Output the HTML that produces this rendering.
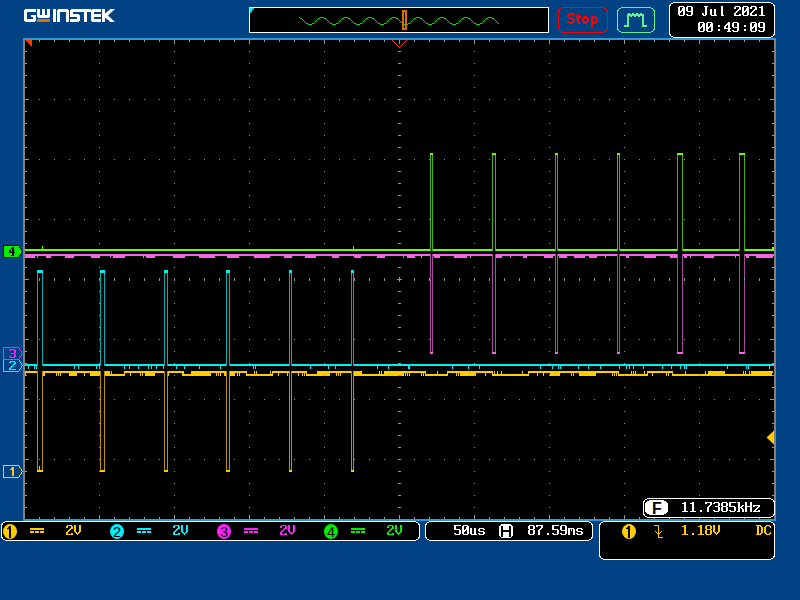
<!DOCTYPE html>
<html><head><meta charset="utf-8"><style>
html,body{margin:0;padding:0;background:#004284;width:800px;height:600px;overflow:hidden}
svg{display:block}
</style></head><body>
<svg width="800" height="600" viewBox="0 0 800 600" shape-rendering="crispEdges">
<rect x="0" y="0" width="800" height="600" fill="#004284"/>
<rect x="24" y="9" width="12" height="3" fill="#ffffff"/>
<rect x="24" y="9" width="3" height="13" fill="#ffffff"/>
<rect x="24" y="19" width="12" height="3" fill="#ffffff"/>
<rect x="33" y="15" width="3" height="7" fill="#ffffff"/>
<rect x="31" y="15" width="5" height="2" fill="#ffffff"/>
<rect x="24" y="9" width="1" height="1" fill="#004284"/>
<rect x="24" y="21" width="1" height="1" fill="#004284"/>
<rect x="35" y="21" width="1" height="1" fill="#004284"/>
<rect x="37" y="9" width="3" height="9" fill="#ffffff"/>
<rect x="42" y="9" width="3" height="9" fill="#ffffff"/>
<rect x="47" y="9" width="3" height="9" fill="#ffffff"/>
<rect x="37" y="15" width="13" height="3" fill="#ffffff"/>
<rect x="37" y="17" width="1" height="1" fill="#004284"/>
<rect x="49" y="17" width="1" height="1" fill="#004284"/>
<rect x="37" y="19" width="13" height="3" fill="#e06c00"/>
<rect x="53" y="9" width="3" height="13" fill="#ffffff"/>
<rect x="57" y="9" width="12" height="3" fill="#ffffff"/>
<rect x="57" y="9" width="3" height="13" fill="#ffffff"/>
<rect x="66" y="9" width="3" height="13" fill="#ffffff"/>
<rect x="57" y="9" width="1" height="1" fill="#004284"/>
<rect x="68" y="9" width="1" height="1" fill="#004284"/>
<rect x="70" y="9" width="21" height="3" fill="#ffffff"/>
<rect x="70" y="9" width="3" height="8" fill="#ffffff"/>
<rect x="70" y="14" width="10" height="3" fill="#ffffff"/>
<rect x="77" y="14" width="3" height="8" fill="#ffffff"/>
<rect x="70" y="19" width="10" height="3" fill="#ffffff"/>
<rect x="70" y="9" width="1" height="1" fill="#004284"/>
<rect x="79" y="14" width="1" height="1" fill="#004284"/>
<rect x="79" y="21" width="1" height="1" fill="#004284"/>
<rect x="84" y="9" width="3" height="13" fill="#ffffff"/>
<rect x="91" y="9" width="3" height="13" fill="#ffffff"/>
<rect x="91" y="9" width="10" height="3" fill="#ffffff"/>
<rect x="91" y="14" width="10" height="3" fill="#ffffff"/>
<rect x="91" y="19" width="10" height="3" fill="#ffffff"/>
<rect x="91" y="9" width="1" height="1" fill="#004284"/>
<rect x="91" y="21" width="1" height="1" fill="#004284"/>
<rect x="102" y="9" width="3" height="13" fill="#ffffff"/>
<polygon points="105,13.5 110.5,9 115,9 108,15.5 115,22 110.5,22 105,17.5" fill="#ffffff" shape-rendering="geometricPrecision"/>
<rect x="249" y="7" width="300" height="26" fill="#ffffff"/>
<rect x="250" y="8" width="298" height="24" fill="#000"/>
<polygon points="250,8 254.5,8 250,13.5" fill="#00e8ff" shape-rendering="geometricPrecision"/>
<rect x="299" y="17" width="1" height="1" fill="#00e000"/>
<rect x="300" y="18" width="1" height="1" fill="#00e000"/>
<rect x="301" y="18" width="1" height="1" fill="#00e000"/>
<rect x="302" y="19" width="1" height="1" fill="#00e000"/>
<rect x="303" y="20" width="1" height="1" fill="#00e000"/>
<rect x="304" y="21" width="1" height="1" fill="#00e000"/>
<rect x="305" y="22" width="1" height="1" fill="#00e000"/>
<rect x="306" y="23" width="1" height="1" fill="#00e000"/>
<rect x="307" y="23" width="1" height="1" fill="#00e000"/>
<rect x="308" y="24" width="1" height="1" fill="#00e000"/>
<rect x="309" y="24" width="1" height="1" fill="#00e000"/>
<rect x="310" y="24" width="1" height="1" fill="#00e000"/>
<rect x="311" y="24" width="1" height="1" fill="#00e000"/>
<rect x="312" y="23" width="1" height="1" fill="#00e000"/>
<rect x="313" y="23" width="1" height="1" fill="#00e000"/>
<rect x="314" y="22" width="1" height="1" fill="#00e000"/>
<rect x="315" y="21" width="1" height="1" fill="#00e000"/>
<rect x="316" y="20" width="1" height="1" fill="#00e000"/>
<rect x="317" y="19" width="1" height="1" fill="#00e000"/>
<rect x="318" y="18" width="1" height="1" fill="#00e000"/>
<rect x="319" y="18" width="1" height="1" fill="#00e000"/>
<rect x="320" y="17" width="1" height="1" fill="#00e000"/>
<rect x="321" y="17" width="1" height="1" fill="#00e000"/>
<rect x="322" y="17" width="1" height="1" fill="#00e000"/>
<rect x="323" y="17" width="1" height="1" fill="#00e000"/>
<rect x="324" y="18" width="1" height="1" fill="#00e000"/>
<rect x="325" y="18" width="1" height="1" fill="#00e000"/>
<rect x="326" y="19" width="1" height="1" fill="#00e000"/>
<rect x="327" y="20" width="1" height="1" fill="#00e000"/>
<rect x="328" y="21" width="1" height="1" fill="#00e000"/>
<rect x="329" y="22" width="1" height="1" fill="#00e000"/>
<rect x="330" y="23" width="1" height="1" fill="#00e000"/>
<rect x="331" y="23" width="1" height="1" fill="#00e000"/>
<rect x="332" y="24" width="1" height="1" fill="#00e000"/>
<rect x="333" y="24" width="1" height="1" fill="#00e000"/>
<rect x="334" y="24" width="1" height="1" fill="#00e000"/>
<rect x="335" y="24" width="1" height="1" fill="#00e000"/>
<rect x="336" y="23" width="1" height="1" fill="#00e000"/>
<rect x="337" y="23" width="1" height="1" fill="#00e000"/>
<rect x="338" y="22" width="1" height="1" fill="#00e000"/>
<rect x="339" y="21" width="1" height="1" fill="#00e000"/>
<rect x="340" y="20" width="1" height="1" fill="#00e000"/>
<rect x="341" y="19" width="1" height="1" fill="#00e000"/>
<rect x="342" y="18" width="1" height="1" fill="#00e000"/>
<rect x="343" y="18" width="1" height="1" fill="#00e000"/>
<rect x="344" y="17" width="1" height="1" fill="#00e000"/>
<rect x="345" y="17" width="1" height="1" fill="#00e000"/>
<rect x="346" y="17" width="1" height="1" fill="#00e000"/>
<rect x="347" y="17" width="1" height="1" fill="#00e000"/>
<rect x="348" y="18" width="1" height="1" fill="#00e000"/>
<rect x="349" y="18" width="1" height="1" fill="#00e000"/>
<rect x="350" y="19" width="1" height="1" fill="#00e000"/>
<rect x="351" y="20" width="1" height="1" fill="#00e000"/>
<rect x="352" y="21" width="1" height="1" fill="#00e000"/>
<rect x="353" y="22" width="1" height="1" fill="#00e000"/>
<rect x="354" y="23" width="1" height="1" fill="#00e000"/>
<rect x="355" y="23" width="1" height="1" fill="#00e000"/>
<rect x="356" y="24" width="1" height="1" fill="#00e000"/>
<rect x="357" y="24" width="1" height="1" fill="#00e000"/>
<rect x="358" y="24" width="1" height="1" fill="#00e000"/>
<rect x="359" y="24" width="1" height="1" fill="#00e000"/>
<rect x="360" y="23" width="1" height="1" fill="#00e000"/>
<rect x="361" y="23" width="1" height="1" fill="#00e000"/>
<rect x="362" y="22" width="1" height="1" fill="#00e000"/>
<rect x="363" y="21" width="1" height="1" fill="#00e000"/>
<rect x="364" y="20" width="1" height="1" fill="#00e000"/>
<rect x="365" y="19" width="1" height="1" fill="#00e000"/>
<rect x="366" y="18" width="1" height="1" fill="#00e000"/>
<rect x="367" y="18" width="1" height="1" fill="#00e000"/>
<rect x="368" y="17" width="1" height="1" fill="#00e000"/>
<rect x="369" y="17" width="1" height="1" fill="#00e000"/>
<rect x="370" y="17" width="1" height="1" fill="#00e000"/>
<rect x="371" y="17" width="1" height="1" fill="#00e000"/>
<rect x="372" y="18" width="1" height="1" fill="#00e000"/>
<rect x="373" y="18" width="1" height="1" fill="#00e000"/>
<rect x="374" y="19" width="1" height="1" fill="#00e000"/>
<rect x="375" y="20" width="1" height="1" fill="#00e000"/>
<rect x="376" y="21" width="1" height="1" fill="#00e000"/>
<rect x="377" y="22" width="1" height="1" fill="#00e000"/>
<rect x="378" y="23" width="1" height="1" fill="#00e000"/>
<rect x="379" y="23" width="1" height="1" fill="#00e000"/>
<rect x="380" y="24" width="1" height="1" fill="#00e000"/>
<rect x="381" y="24" width="1" height="1" fill="#00e000"/>
<rect x="382" y="24" width="1" height="1" fill="#00e000"/>
<rect x="383" y="24" width="1" height="1" fill="#00e000"/>
<rect x="384" y="23" width="1" height="1" fill="#00e000"/>
<rect x="385" y="23" width="1" height="1" fill="#00e000"/>
<rect x="386" y="22" width="1" height="1" fill="#00e000"/>
<rect x="387" y="21" width="1" height="1" fill="#00e000"/>
<rect x="388" y="20" width="1" height="1" fill="#00e000"/>
<rect x="389" y="19" width="1" height="1" fill="#00e000"/>
<rect x="390" y="18" width="1" height="1" fill="#00e000"/>
<rect x="391" y="18" width="1" height="1" fill="#00e000"/>
<rect x="392" y="17" width="1" height="1" fill="#00e000"/>
<rect x="393" y="17" width="1" height="1" fill="#00e000"/>
<rect x="394" y="17" width="1" height="1" fill="#00e000"/>
<rect x="395" y="17" width="1" height="1" fill="#00e000"/>
<rect x="396" y="18" width="1" height="1" fill="#00e000"/>
<rect x="397" y="18" width="1" height="1" fill="#00e000"/>
<rect x="398" y="19" width="1" height="1" fill="#00e000"/>
<rect x="399" y="20" width="1" height="1" fill="#00e000"/>
<rect x="400" y="21" width="1" height="1" fill="#00e000"/>
<rect x="401" y="22" width="1" height="1" fill="#00e000"/>
<rect x="402" y="23" width="1" height="1" fill="#00e000"/>
<rect x="403" y="23" width="1" height="1" fill="#00e000"/>
<rect x="404" y="24" width="1" height="1" fill="#00e000"/>
<rect x="405" y="24" width="1" height="1" fill="#00e000"/>
<rect x="406" y="24" width="1" height="1" fill="#00e000"/>
<rect x="407" y="24" width="1" height="1" fill="#00e000"/>
<rect x="408" y="23" width="1" height="1" fill="#00e000"/>
<rect x="409" y="23" width="1" height="1" fill="#00e000"/>
<rect x="410" y="22" width="1" height="1" fill="#00e000"/>
<rect x="411" y="21" width="1" height="1" fill="#00e000"/>
<rect x="412" y="20" width="1" height="1" fill="#00e000"/>
<rect x="413" y="19" width="1" height="1" fill="#00e000"/>
<rect x="414" y="18" width="1" height="1" fill="#00e000"/>
<rect x="415" y="18" width="1" height="1" fill="#00e000"/>
<rect x="416" y="17" width="1" height="1" fill="#00e000"/>
<rect x="417" y="17" width="1" height="1" fill="#00e000"/>
<rect x="418" y="17" width="1" height="1" fill="#00e000"/>
<rect x="419" y="17" width="1" height="1" fill="#00e000"/>
<rect x="420" y="18" width="1" height="1" fill="#00e000"/>
<rect x="421" y="18" width="1" height="1" fill="#00e000"/>
<rect x="422" y="19" width="1" height="1" fill="#00e000"/>
<rect x="423" y="20" width="1" height="1" fill="#00e000"/>
<rect x="424" y="21" width="1" height="1" fill="#00e000"/>
<rect x="425" y="22" width="1" height="1" fill="#00e000"/>
<rect x="426" y="23" width="1" height="1" fill="#00e000"/>
<rect x="427" y="23" width="1" height="1" fill="#00e000"/>
<rect x="428" y="24" width="1" height="1" fill="#00e000"/>
<rect x="429" y="24" width="1" height="1" fill="#00e000"/>
<rect x="430" y="24" width="1" height="1" fill="#00e000"/>
<rect x="431" y="24" width="1" height="1" fill="#00e000"/>
<rect x="432" y="23" width="1" height="1" fill="#00e000"/>
<rect x="433" y="23" width="1" height="1" fill="#00e000"/>
<rect x="434" y="22" width="1" height="1" fill="#00e000"/>
<rect x="435" y="21" width="1" height="1" fill="#00e000"/>
<rect x="436" y="20" width="1" height="1" fill="#00e000"/>
<rect x="437" y="19" width="1" height="1" fill="#00e000"/>
<rect x="438" y="18" width="1" height="1" fill="#00e000"/>
<rect x="439" y="18" width="1" height="1" fill="#00e000"/>
<rect x="440" y="17" width="1" height="1" fill="#00e000"/>
<rect x="441" y="17" width="1" height="1" fill="#00e000"/>
<rect x="442" y="17" width="1" height="1" fill="#00e000"/>
<rect x="443" y="17" width="1" height="1" fill="#00e000"/>
<rect x="444" y="18" width="1" height="1" fill="#00e000"/>
<rect x="445" y="18" width="1" height="1" fill="#00e000"/>
<rect x="446" y="19" width="1" height="1" fill="#00e000"/>
<rect x="447" y="20" width="1" height="1" fill="#00e000"/>
<rect x="448" y="21" width="1" height="1" fill="#00e000"/>
<rect x="449" y="22" width="1" height="1" fill="#00e000"/>
<rect x="450" y="23" width="1" height="1" fill="#00e000"/>
<rect x="451" y="23" width="1" height="1" fill="#00e000"/>
<rect x="452" y="24" width="1" height="1" fill="#00e000"/>
<rect x="453" y="24" width="1" height="1" fill="#00e000"/>
<rect x="454" y="24" width="1" height="1" fill="#00e000"/>
<rect x="455" y="24" width="1" height="1" fill="#00e000"/>
<rect x="456" y="23" width="1" height="1" fill="#00e000"/>
<rect x="457" y="23" width="1" height="1" fill="#00e000"/>
<rect x="458" y="22" width="1" height="1" fill="#00e000"/>
<rect x="459" y="21" width="1" height="1" fill="#00e000"/>
<rect x="460" y="20" width="1" height="1" fill="#00e000"/>
<rect x="461" y="19" width="1" height="1" fill="#00e000"/>
<rect x="462" y="18" width="1" height="1" fill="#00e000"/>
<rect x="463" y="18" width="1" height="1" fill="#00e000"/>
<rect x="464" y="17" width="1" height="1" fill="#00e000"/>
<rect x="465" y="17" width="1" height="1" fill="#00e000"/>
<rect x="466" y="17" width="1" height="1" fill="#00e000"/>
<rect x="467" y="17" width="1" height="1" fill="#00e000"/>
<rect x="468" y="18" width="1" height="1" fill="#00e000"/>
<rect x="469" y="18" width="1" height="1" fill="#00e000"/>
<rect x="470" y="19" width="1" height="1" fill="#00e000"/>
<rect x="471" y="20" width="1" height="1" fill="#00e000"/>
<rect x="472" y="21" width="1" height="1" fill="#00e000"/>
<rect x="473" y="22" width="1" height="1" fill="#00e000"/>
<rect x="474" y="23" width="1" height="1" fill="#00e000"/>
<rect x="475" y="23" width="1" height="1" fill="#00e000"/>
<rect x="476" y="24" width="1" height="1" fill="#00e000"/>
<rect x="477" y="24" width="1" height="1" fill="#00e000"/>
<rect x="478" y="24" width="1" height="1" fill="#00e000"/>
<rect x="479" y="24" width="1" height="1" fill="#00e000"/>
<rect x="480" y="23" width="1" height="1" fill="#00e000"/>
<rect x="481" y="23" width="1" height="1" fill="#00e000"/>
<rect x="482" y="22" width="1" height="1" fill="#00e000"/>
<rect x="483" y="21" width="1" height="1" fill="#00e000"/>
<rect x="484" y="20" width="1" height="1" fill="#00e000"/>
<rect x="485" y="19" width="1" height="1" fill="#00e000"/>
<rect x="486" y="18" width="1" height="1" fill="#00e000"/>
<rect x="487" y="18" width="1" height="1" fill="#00e000"/>
<rect x="488" y="17" width="1" height="1" fill="#00e000"/>
<rect x="489" y="17" width="1" height="1" fill="#00e000"/>
<rect x="490" y="17" width="1" height="1" fill="#00e000"/>
<rect x="491" y="17" width="1" height="1" fill="#00e000"/>
<rect x="492" y="18" width="1" height="1" fill="#00e000"/>
<rect x="493" y="18" width="1" height="1" fill="#00e000"/>
<rect x="494" y="19" width="1" height="1" fill="#00e000"/>
<rect x="495" y="20" width="1" height="1" fill="#00e000"/>
<rect x="496" y="21" width="1" height="1" fill="#00e000"/>
<rect x="497" y="22" width="1" height="1" fill="#00e000"/>
<rect x="498" y="23" width="1" height="1" fill="#00e000"/>
<rect x="402" y="10" width="5" height="2" fill="#dc6e00"/>
<rect x="402" y="28" width="5" height="2" fill="#dc6e00"/>
<rect x="402" y="10" width="2" height="20" fill="#dc6e00"/>
<rect x="405" y="10" width="2" height="20" fill="#dc6e00"/>
<rect x="562" y="7" width="42" height="1" fill="#ff0000"/>
<rect x="562" y="32" width="42" height="1" fill="#ff0000"/>
<rect x="558" y="11" width="1" height="18" fill="#ff0000"/>
<rect x="607" y="11" width="1" height="18" fill="#ff0000"/>
<rect x="560" y="8" width="2" height="1" fill="#ff0000"/>
<rect x="604" y="8" width="2" height="1" fill="#ff0000"/>
<rect x="559" y="9" width="1" height="1" fill="#ff0000"/>
<rect x="606" y="9" width="1" height="1" fill="#ff0000"/>
<rect x="558" y="10" width="2" height="1" fill="#ff0000"/>
<rect x="606" y="10" width="2" height="1" fill="#ff0000"/>
<rect x="560" y="31" width="2" height="1" fill="#ff0000"/>
<rect x="604" y="31" width="2" height="1" fill="#ff0000"/>
<rect x="559" y="30" width="1" height="1" fill="#ff0000"/>
<rect x="606" y="30" width="1" height="1" fill="#ff0000"/>
<rect x="558" y="29" width="2" height="1" fill="#ff0000"/>
<rect x="606" y="29" width="2" height="1" fill="#ff0000"/>
<g fill="#ff0000"><rect x="569" y="13" width="4" height="1"/><rect x="568" y="14" width="7" height="1"/><rect x="567" y="15" width="3" height="1"/><rect x="573" y="15" width="2" height="1"/><rect x="567" y="16" width="2" height="1"/><rect x="568" y="17" width="3" height="1"/><rect x="569" y="18" width="5" height="1"/><rect x="571" y="19" width="4" height="1"/><rect x="573" y="20" width="2" height="1"/><rect x="567" y="21" width="2" height="1"/><rect x="573" y="21" width="2" height="1"/><rect x="568" y="22" width="6" height="1"/><rect x="569" y="23" width="4" height="1"/><rect x="578" y="14" width="1" height="1"/><rect x="577" y="15" width="2" height="1"/><rect x="576" y="16" width="5" height="1"/><rect x="576" y="17" width="5" height="1"/><rect x="577" y="18" width="2" height="1"/><rect x="577" y="19" width="2" height="1"/><rect x="577" y="20" width="2" height="1"/><rect x="577" y="21" width="2" height="1"/><rect x="577" y="22" width="3" height="1"/><rect x="578" y="23" width="3" height="1"/><rect x="584" y="16" width="3" height="1"/><rect x="583" y="17" width="5" height="1"/><rect x="582" y="18" width="3" height="1"/><rect x="586" y="18" width="3" height="1"/><rect x="582" y="19" width="2" height="1"/><rect x="587" y="19" width="2" height="1"/><rect x="582" y="20" width="2" height="1"/><rect x="587" y="20" width="2" height="1"/><rect x="582" y="21" width="3" height="1"/><rect x="586" y="21" width="3" height="1"/><rect x="583" y="22" width="5" height="1"/><rect x="584" y="23" width="3" height="1"/><rect x="591" y="16" width="5" height="1"/><rect x="591" y="17" width="6" height="1"/><rect x="591" y="18" width="3" height="1"/><rect x="595" y="18" width="3" height="1"/><rect x="591" y="19" width="2" height="1"/><rect x="596" y="19" width="2" height="1"/><rect x="591" y="20" width="2" height="1"/><rect x="596" y="20" width="2" height="1"/><rect x="591" y="21" width="3" height="1"/><rect x="595" y="21" width="3" height="1"/><rect x="591" y="22" width="6" height="1"/><rect x="591" y="23" width="5" height="1"/><rect x="591" y="24" width="2" height="1"/><rect x="591" y="25" width="2" height="1"/><rect x="591" y="26" width="2" height="1"/></g>
<rect x="621" y="7" width="30" height="1" fill="#60f090"/>
<rect x="621" y="32" width="30" height="1" fill="#60f090"/>
<rect x="617" y="11" width="1" height="18" fill="#60f090"/>
<rect x="654" y="11" width="1" height="18" fill="#60f090"/>
<rect x="619" y="8" width="2" height="1" fill="#60f090"/>
<rect x="651" y="8" width="2" height="1" fill="#60f090"/>
<rect x="618" y="9" width="1" height="1" fill="#60f090"/>
<rect x="653" y="9" width="1" height="1" fill="#60f090"/>
<rect x="617" y="10" width="2" height="1" fill="#60f090"/>
<rect x="653" y="10" width="2" height="1" fill="#60f090"/>
<rect x="619" y="31" width="2" height="1" fill="#60f090"/>
<rect x="651" y="31" width="2" height="1" fill="#60f090"/>
<rect x="618" y="30" width="1" height="1" fill="#60f090"/>
<rect x="653" y="30" width="1" height="1" fill="#60f090"/>
<rect x="617" y="29" width="2" height="1" fill="#60f090"/>
<rect x="653" y="29" width="2" height="1" fill="#60f090"/>
<rect x="624" y="25" width="5" height="2" fill="#60f090"/>
<rect x="627" y="14" width="2" height="13" fill="#60f090"/>
<rect x="627" y="14" width="17" height="2" fill="#60f090"/>
<rect x="642" y="14" width="2" height="13" fill="#60f090"/>
<rect x="642" y="25" width="5" height="2" fill="#60f090"/>
<rect x="628" y="13" width="2" height="1" fill="#60f090"/>
<rect x="632" y="13" width="2" height="1" fill="#60f090"/>
<rect x="636" y="13" width="2" height="1" fill="#60f090"/>
<rect x="640" y="13" width="2" height="1" fill="#60f090"/>
<rect x="630" y="16" width="2" height="1" fill="#60f090"/>
<rect x="634" y="16" width="2" height="1" fill="#60f090"/>
<rect x="638" y="16" width="2" height="1" fill="#60f090"/>
<rect x="673" y="3" width="98" height="34" fill="#000"/>
<rect x="671" y="4" width="102" height="32" fill="#000"/>
<rect x="670" y="6" width="104" height="28" fill="#000"/>
<rect x="673" y="2" width="98" height="1" fill="#fff"/>
<rect x="673" y="37" width="98" height="1" fill="#fff"/>
<rect x="669" y="6" width="1" height="28" fill="#fff"/>
<rect x="774" y="6" width="1" height="28" fill="#fff"/>
<rect x="671" y="3" width="2" height="1" fill="#fff"/>
<rect x="771" y="3" width="2" height="1" fill="#fff"/>
<rect x="670" y="4" width="1" height="1" fill="#fff"/>
<rect x="773" y="4" width="1" height="1" fill="#fff"/>
<rect x="669" y="5" width="2" height="1" fill="#fff"/>
<rect x="773" y="5" width="2" height="1" fill="#fff"/>
<rect x="671" y="36" width="2" height="1" fill="#fff"/>
<rect x="771" y="36" width="2" height="1" fill="#fff"/>
<rect x="670" y="35" width="1" height="1" fill="#fff"/>
<rect x="773" y="35" width="1" height="1" fill="#fff"/>
<rect x="669" y="34" width="2" height="1" fill="#fff"/>
<rect x="773" y="34" width="2" height="1" fill="#fff"/>
<g fill="#fff"><rect x="679" y="6" width="5" height="1"/><rect x="679" y="15" width="5" height="1"/><rect x="678" y="7" width="2" height="4"/><rect x="678" y="13" width="2" height="2"/><rect x="683" y="7" width="2" height="1"/><rect x="683" y="11" width="2" height="4"/><rect x="682" y="8" width="3" height="2"/><rect x="681" y="10" width="4" height="1"/><rect x="678" y="11" width="4" height="1"/><rect x="678" y="12" width="3" height="1"/><rect x="687" y="6" width="5" height="1"/><rect x="687" y="15" width="5" height="1"/><rect x="686" y="7" width="2" height="4"/><rect x="686" y="14" width="2" height="1"/><rect x="691" y="7" width="2" height="4"/><rect x="691" y="12" width="2" height="3"/><rect x="687" y="11" width="6" height="1"/><rect x="704" y="6" width="4" height="1"/><rect x="705" y="7" width="2" height="8"/><rect x="702" y="13" width="2" height="2"/><rect x="703" y="15" width="3" height="1"/><rect x="710" y="9" width="2" height="6"/><rect x="714" y="9" width="2" height="6"/><rect x="711" y="15" width="6" height="1"/><rect x="721" y="6" width="2" height="9"/><rect x="721" y="15" width="3" height="1"/><rect x="735" y="6" width="5" height="1"/><rect x="734" y="7" width="2" height="2"/><rect x="734" y="13" width="2" height="2"/><rect x="739" y="7" width="2" height="2"/><rect x="739" y="14" width="2" height="1"/><rect x="738" y="9" width="3" height="1"/><rect x="737" y="10" width="2" height="1"/><rect x="736" y="11" width="2" height="1"/><rect x="735" y="12" width="2" height="1"/><rect x="734" y="15" width="7" height="1"/><rect x="743" y="6" width="5" height="1"/><rect x="743" y="15" width="5" height="1"/><rect x="742" y="7" width="2" height="4"/><rect x="742" y="13" width="2" height="2"/><rect x="747" y="7" width="2" height="1"/><rect x="747" y="11" width="2" height="4"/><rect x="746" y="8" width="3" height="2"/><rect x="745" y="10" width="4" height="1"/><rect x="742" y="11" width="4" height="1"/><rect x="742" y="12" width="3" height="1"/><rect x="751" y="6" width="5" height="1"/><rect x="750" y="7" width="2" height="2"/><rect x="750" y="13" width="2" height="2"/><rect x="755" y="7" width="2" height="2"/><rect x="755" y="14" width="2" height="1"/><rect x="754" y="9" width="3" height="1"/><rect x="753" y="10" width="2" height="1"/><rect x="752" y="11" width="2" height="1"/><rect x="751" y="12" width="2" height="1"/><rect x="750" y="15" width="7" height="1"/><rect x="761" y="6" width="2" height="1"/><rect x="761" y="8" width="2" height="7"/><rect x="759" y="7" width="4" height="1"/><rect x="759" y="15" width="6" height="1"/></g>
<g fill="#fff"><rect x="699" y="22" width="5" height="1"/><rect x="699" y="31" width="5" height="1"/><rect x="698" y="23" width="2" height="4"/><rect x="698" y="29" width="2" height="2"/><rect x="703" y="23" width="2" height="1"/><rect x="703" y="27" width="2" height="4"/><rect x="702" y="24" width="3" height="2"/><rect x="701" y="26" width="4" height="1"/><rect x="698" y="27" width="4" height="1"/><rect x="698" y="28" width="3" height="1"/><rect x="707" y="22" width="5" height="1"/><rect x="707" y="31" width="5" height="1"/><rect x="706" y="23" width="2" height="4"/><rect x="706" y="29" width="2" height="2"/><rect x="711" y="23" width="2" height="1"/><rect x="711" y="27" width="2" height="4"/><rect x="710" y="24" width="3" height="2"/><rect x="709" y="26" width="4" height="1"/><rect x="706" y="27" width="4" height="1"/><rect x="706" y="28" width="3" height="1"/><rect x="718" y="25" width="2" height="2"/><rect x="718" y="29" width="2" height="2"/><rect x="728" y="22" width="2" height="1"/><rect x="728" y="25" width="2" height="3"/><rect x="728" y="29" width="2" height="2"/><rect x="727" y="23" width="3" height="1"/><rect x="726" y="24" width="4" height="1"/><rect x="725" y="25" width="2" height="1"/><rect x="724" y="26" width="2" height="2"/><rect x="724" y="28" width="7" height="1"/><rect x="727" y="31" width="4" height="1"/><rect x="733" y="22" width="5" height="1"/><rect x="733" y="31" width="5" height="1"/><rect x="732" y="23" width="2" height="4"/><rect x="732" y="30" width="2" height="1"/><rect x="737" y="23" width="2" height="4"/><rect x="737" y="28" width="2" height="3"/><rect x="733" y="27" width="6" height="1"/><rect x="744" y="25" width="2" height="2"/><rect x="744" y="29" width="2" height="2"/><rect x="751" y="22" width="5" height="1"/><rect x="751" y="31" width="5" height="1"/><rect x="750" y="23" width="2" height="4"/><rect x="750" y="29" width="2" height="2"/><rect x="755" y="23" width="2" height="1"/><rect x="755" y="27" width="2" height="4"/><rect x="754" y="24" width="3" height="2"/><rect x="753" y="26" width="4" height="1"/><rect x="750" y="27" width="4" height="1"/><rect x="750" y="28" width="3" height="1"/><rect x="759" y="22" width="5" height="1"/><rect x="759" y="31" width="5" height="1"/><rect x="758" y="23" width="2" height="4"/><rect x="758" y="30" width="2" height="1"/><rect x="763" y="23" width="2" height="4"/><rect x="763" y="28" width="2" height="3"/><rect x="759" y="27" width="6" height="1"/></g>
<rect x="23" y="38" width="753" height="483" fill="#2f97d0"/>
<rect x="24" y="39" width="751" height="481" fill="#86817c"/>
<rect x="25" y="40" width="749" height="479" fill="#000"/>
<rect x="25" y="254" width="749" height="2" fill="#f566e2"/>
<rect x="25" y="256" width="10" height="2" fill="#f566e2"/>
<rect x="46" y="256" width="5" height="2" fill="#f566e2"/>
<rect x="65" y="256" width="9" height="2" fill="#f566e2"/>
<rect x="91" y="256" width="9" height="2" fill="#f566e2"/>
<rect x="113" y="256" width="12" height="2" fill="#f566e2"/>
<rect x="146" y="256" width="9" height="2" fill="#f566e2"/>
<rect x="173" y="256" width="12" height="2" fill="#f566e2"/>
<rect x="199" y="256" width="16" height="2" fill="#f566e2"/>
<rect x="227" y="256" width="12" height="2" fill="#f566e2"/>
<rect x="254" y="256" width="16" height="2" fill="#f566e2"/>
<rect x="285" y="256" width="7" height="2" fill="#f566e2"/>
<rect x="305" y="256" width="11" height="2" fill="#f566e2"/>
<rect x="332" y="256" width="7" height="2" fill="#f566e2"/>
<rect x="354" y="256" width="7" height="2" fill="#f566e2"/>
<rect x="377" y="256" width="8" height="2" fill="#f566e2"/>
<rect x="407" y="256" width="8" height="2" fill="#f566e2"/>
<rect x="434" y="256" width="6" height="2" fill="#f566e2"/>
<rect x="454" y="256" width="13" height="2" fill="#f566e2"/>
<rect x="495" y="256" width="7" height="2" fill="#f566e2"/>
<rect x="523" y="256" width="4" height="2" fill="#f566e2"/>
<rect x="544" y="256" width="9" height="2" fill="#f566e2"/>
<rect x="559" y="256" width="8" height="2" fill="#f566e2"/>
<rect x="574" y="256" width="11" height="2" fill="#f566e2"/>
<rect x="589" y="256" width="8" height="2" fill="#f566e2"/>
<rect x="626" y="256" width="3" height="2" fill="#f566e2"/>
<rect x="644" y="256" width="12" height="2" fill="#f566e2"/>
<rect x="670" y="256" width="7" height="2" fill="#f566e2"/>
<rect x="684" y="256" width="3" height="2" fill="#f566e2"/>
<rect x="704" y="256" width="10" height="2" fill="#f566e2"/>
<rect x="746" y="256" width="3" height="2" fill="#f566e2"/>
<rect x="756" y="256" width="17" height="2" fill="#f566e2"/>
<rect x="37" y="256" width="1" height="2" fill="#f566e2"/>
<rect x="110" y="256" width="1" height="2" fill="#f566e2"/>
<rect x="143" y="256" width="1" height="2" fill="#f566e2"/>
<rect x="254" y="256" width="1" height="2" fill="#f566e2"/>
<rect x="284" y="256" width="1" height="2" fill="#f566e2"/>
<rect x="336" y="256" width="1" height="2" fill="#f566e2"/>
<rect x="403" y="256" width="1" height="2" fill="#f566e2"/>
<rect x="421" y="256" width="1" height="2" fill="#f566e2"/>
<rect x="470" y="256" width="1" height="2" fill="#f566e2"/>
<rect x="510" y="256" width="1" height="2" fill="#f566e2"/>
<rect x="605" y="256" width="1" height="2" fill="#f566e2"/>
<rect x="690" y="256" width="1" height="2" fill="#f566e2"/>
<rect x="735" y="256" width="1" height="2" fill="#f566e2"/>
<rect x="430" y="254" width="3" height="5" fill="#000"/>
<rect x="430" y="254" width="1" height="100" fill="#a84a9c"/>
<rect x="432" y="254" width="1" height="100" fill="#a84a9c"/>
<rect x="430" y="352" width="3" height="2" fill="#f566e2"/>
<rect x="429" y="254" width="1" height="2" fill="#f566e2"/>
<rect x="433" y="254" width="1" height="2" fill="#f566e2"/>
<rect x="492" y="254" width="4" height="5" fill="#000"/>
<rect x="492" y="254" width="1" height="100" fill="#a84a9c"/>
<rect x="495" y="254" width="1" height="100" fill="#a84a9c"/>
<rect x="492" y="352" width="4" height="2" fill="#f566e2"/>
<rect x="491" y="254" width="1" height="2" fill="#f566e2"/>
<rect x="496" y="254" width="1" height="2" fill="#f566e2"/>
<rect x="555" y="254" width="3" height="5" fill="#000"/>
<rect x="555" y="254" width="1" height="100" fill="#a84a9c"/>
<rect x="557" y="254" width="1" height="100" fill="#a84a9c"/>
<rect x="555" y="352" width="3" height="2" fill="#f566e2"/>
<rect x="554" y="254" width="1" height="2" fill="#f566e2"/>
<rect x="558" y="254" width="1" height="2" fill="#f566e2"/>
<rect x="617" y="254" width="3" height="5" fill="#000"/>
<rect x="617" y="254" width="1" height="100" fill="#a84a9c"/>
<rect x="619" y="254" width="1" height="100" fill="#a84a9c"/>
<rect x="617" y="352" width="3" height="2" fill="#f566e2"/>
<rect x="616" y="254" width="1" height="2" fill="#f566e2"/>
<rect x="620" y="254" width="1" height="2" fill="#f566e2"/>
<rect x="677" y="254" width="6" height="5" fill="#000"/>
<rect x="677" y="254" width="1" height="100" fill="#a84a9c"/>
<rect x="682" y="254" width="1" height="100" fill="#a84a9c"/>
<rect x="677" y="352" width="6" height="2" fill="#f566e2"/>
<rect x="676" y="254" width="1" height="2" fill="#f566e2"/>
<rect x="683" y="254" width="1" height="2" fill="#f566e2"/>
<rect x="739" y="254" width="6" height="5" fill="#000"/>
<rect x="739" y="254" width="1" height="100" fill="#a84a9c"/>
<rect x="744" y="254" width="1" height="100" fill="#a84a9c"/>
<rect x="739" y="352" width="6" height="2" fill="#f566e2"/>
<rect x="738" y="254" width="1" height="2" fill="#f566e2"/>
<rect x="745" y="254" width="1" height="2" fill="#f566e2"/>
<rect x="25" y="249" width="749" height="2" fill="#66ff00"/>
<rect x="42" y="246" width="1" height="3" fill="#66ff00"/>
<rect x="353" y="246" width="1" height="3" fill="#66ff00"/>
<rect x="772" y="247" width="2" height="2" fill="#66ff00"/>
<rect x="431" y="249" width="1" height="2" fill="#000"/>
<rect x="430" y="153" width="1" height="98" fill="#48b000"/>
<rect x="432" y="153" width="1" height="98" fill="#48b000"/>
<rect x="430" y="153" width="3" height="2" fill="#66ff00"/>
<rect x="493" y="249" width="2" height="2" fill="#000"/>
<rect x="492" y="153" width="1" height="98" fill="#48b000"/>
<rect x="495" y="153" width="1" height="98" fill="#48b000"/>
<rect x="492" y="153" width="4" height="2" fill="#66ff00"/>
<rect x="556" y="249" width="1" height="2" fill="#000"/>
<rect x="555" y="153" width="1" height="98" fill="#48b000"/>
<rect x="557" y="153" width="1" height="98" fill="#48b000"/>
<rect x="555" y="153" width="3" height="2" fill="#66ff00"/>
<rect x="618" y="249" width="1" height="2" fill="#000"/>
<rect x="617" y="153" width="1" height="98" fill="#48b000"/>
<rect x="619" y="153" width="1" height="98" fill="#48b000"/>
<rect x="617" y="153" width="3" height="2" fill="#66ff00"/>
<rect x="678" y="249" width="4" height="2" fill="#000"/>
<rect x="677" y="153" width="1" height="98" fill="#48b000"/>
<rect x="682" y="153" width="1" height="98" fill="#48b000"/>
<rect x="677" y="153" width="6" height="2" fill="#66ff00"/>
<rect x="740" y="249" width="4" height="2" fill="#000"/>
<rect x="739" y="153" width="1" height="98" fill="#48b000"/>
<rect x="744" y="153" width="1" height="98" fill="#48b000"/>
<rect x="739" y="153" width="6" height="2" fill="#66ff00"/>
<rect x="25" y="371" width="12" height="2" fill="#ffcc00"/>
<rect x="25" y="371" width="1" height="5" fill="#ffcc00"/>
<rect x="37" y="371" width="7" height="5" fill="#ffcc00"/>
<rect x="37" y="371" width="1" height="5" fill="#ffcc00"/>
<rect x="44" y="371" width="25" height="2" fill="#ffcc00"/>
<rect x="44" y="371" width="1" height="5" fill="#ffcc00"/>
<rect x="69" y="371" width="7" height="5" fill="#ffcc00"/>
<rect x="69" y="371" width="1" height="5" fill="#ffcc00"/>
<rect x="76" y="371" width="14" height="2" fill="#ffcc00"/>
<rect x="76" y="371" width="1" height="5" fill="#ffcc00"/>
<rect x="90" y="371" width="19" height="5" fill="#ffcc00"/>
<rect x="90" y="371" width="1" height="5" fill="#ffcc00"/>
<rect x="109" y="374" width="15" height="2" fill="#ffcc00"/>
<rect x="109" y="371" width="1" height="5" fill="#ffcc00"/>
<rect x="124" y="371" width="21" height="2" fill="#ffcc00"/>
<rect x="124" y="371" width="1" height="5" fill="#ffcc00"/>
<rect x="145" y="371" width="9" height="5" fill="#ffcc00"/>
<rect x="145" y="371" width="1" height="5" fill="#ffcc00"/>
<rect x="154" y="371" width="28" height="2" fill="#ffcc00"/>
<rect x="154" y="371" width="1" height="5" fill="#ffcc00"/>
<rect x="182" y="374" width="9" height="2" fill="#ffcc00"/>
<rect x="182" y="371" width="1" height="5" fill="#ffcc00"/>
<rect x="191" y="371" width="18" height="5" fill="#ffcc00"/>
<rect x="191" y="371" width="1" height="5" fill="#ffcc00"/>
<rect x="209" y="371" width="15" height="2" fill="#ffcc00"/>
<rect x="209" y="371" width="1" height="5" fill="#ffcc00"/>
<rect x="224" y="371" width="10" height="5" fill="#ffcc00"/>
<rect x="224" y="371" width="1" height="5" fill="#ffcc00"/>
<rect x="234" y="371" width="12" height="2" fill="#ffcc00"/>
<rect x="234" y="371" width="1" height="5" fill="#ffcc00"/>
<rect x="246" y="374" width="26" height="2" fill="#ffcc00"/>
<rect x="246" y="371" width="1" height="5" fill="#ffcc00"/>
<rect x="272" y="371" width="34" height="2" fill="#ffcc00"/>
<rect x="272" y="371" width="1" height="5" fill="#ffcc00"/>
<rect x="306" y="374" width="11" height="2" fill="#ffcc00"/>
<rect x="306" y="371" width="1" height="5" fill="#ffcc00"/>
<rect x="317" y="371" width="12" height="5" fill="#ffcc00"/>
<rect x="317" y="371" width="1" height="5" fill="#ffcc00"/>
<rect x="329" y="371" width="25" height="2" fill="#ffcc00"/>
<rect x="329" y="371" width="1" height="5" fill="#ffcc00"/>
<rect x="354" y="371" width="7" height="5" fill="#ffcc00"/>
<rect x="354" y="371" width="1" height="5" fill="#ffcc00"/>
<rect x="361" y="374" width="23" height="2" fill="#ffcc00"/>
<rect x="361" y="371" width="1" height="5" fill="#ffcc00"/>
<rect x="384" y="371" width="19" height="5" fill="#ffcc00"/>
<rect x="384" y="371" width="1" height="5" fill="#ffcc00"/>
<rect x="403" y="371" width="22" height="2" fill="#ffcc00"/>
<rect x="403" y="371" width="1" height="5" fill="#ffcc00"/>
<rect x="425" y="374" width="22" height="2" fill="#ffcc00"/>
<rect x="425" y="371" width="1" height="5" fill="#ffcc00"/>
<rect x="447" y="371" width="15" height="2" fill="#ffcc00"/>
<rect x="447" y="371" width="1" height="5" fill="#ffcc00"/>
<rect x="462" y="371" width="13" height="5" fill="#ffcc00"/>
<rect x="462" y="371" width="1" height="5" fill="#ffcc00"/>
<rect x="475" y="371" width="17" height="2" fill="#ffcc00"/>
<rect x="475" y="371" width="1" height="5" fill="#ffcc00"/>
<rect x="492" y="374" width="36" height="2" fill="#ffcc00"/>
<rect x="492" y="371" width="1" height="5" fill="#ffcc00"/>
<rect x="528" y="371" width="22" height="2" fill="#ffcc00"/>
<rect x="528" y="371" width="1" height="5" fill="#ffcc00"/>
<rect x="550" y="371" width="8" height="5" fill="#ffcc00"/>
<rect x="550" y="371" width="1" height="5" fill="#ffcc00"/>
<rect x="558" y="371" width="21" height="2" fill="#ffcc00"/>
<rect x="558" y="371" width="1" height="5" fill="#ffcc00"/>
<rect x="579" y="371" width="16" height="5" fill="#ffcc00"/>
<rect x="579" y="371" width="1" height="5" fill="#ffcc00"/>
<rect x="595" y="371" width="23" height="2" fill="#ffcc00"/>
<rect x="595" y="371" width="1" height="5" fill="#ffcc00"/>
<rect x="618" y="374" width="29" height="2" fill="#ffcc00"/>
<rect x="618" y="371" width="1" height="5" fill="#ffcc00"/>
<rect x="647" y="371" width="25" height="2" fill="#ffcc00"/>
<rect x="647" y="371" width="1" height="5" fill="#ffcc00"/>
<rect x="672" y="374" width="36" height="2" fill="#ffcc00"/>
<rect x="672" y="371" width="1" height="5" fill="#ffcc00"/>
<rect x="708" y="371" width="16" height="5" fill="#ffcc00"/>
<rect x="708" y="371" width="1" height="5" fill="#ffcc00"/>
<rect x="724" y="374" width="27" height="2" fill="#ffcc00"/>
<rect x="724" y="371" width="1" height="5" fill="#ffcc00"/>
<rect x="751" y="371" width="20" height="5" fill="#ffcc00"/>
<rect x="751" y="371" width="1" height="5" fill="#ffcc00"/>
<rect x="771" y="371" width="2" height="2" fill="#ffcc00"/>
<rect x="771" y="371" width="1" height="5" fill="#ffcc00"/>
<rect x="37" y="371" width="1" height="5" fill="#ffcc00"/>
<rect x="39" y="371" width="1" height="5" fill="#ffcc00"/>
<rect x="41" y="371" width="1" height="5" fill="#ffcc00"/>
<rect x="43" y="371" width="1" height="5" fill="#ffcc00"/>
<rect x="56" y="371" width="1" height="5" fill="#ffcc00"/>
<rect x="58" y="371" width="1" height="5" fill="#ffcc00"/>
<rect x="60" y="371" width="1" height="5" fill="#ffcc00"/>
<rect x="69" y="371" width="1" height="5" fill="#ffcc00"/>
<rect x="71" y="371" width="1" height="5" fill="#ffcc00"/>
<rect x="73" y="371" width="1" height="5" fill="#ffcc00"/>
<rect x="84" y="371" width="1" height="5" fill="#ffcc00"/>
<rect x="102" y="371" width="1" height="5" fill="#ffcc00"/>
<rect x="104" y="371" width="1" height="5" fill="#ffcc00"/>
<rect x="111" y="371" width="1" height="5" fill="#ffcc00"/>
<rect x="130" y="371" width="1" height="5" fill="#ffcc00"/>
<rect x="140" y="371" width="1" height="5" fill="#ffcc00"/>
<rect x="142" y="371" width="1" height="5" fill="#ffcc00"/>
<rect x="148" y="371" width="1" height="5" fill="#ffcc00"/>
<rect x="164" y="371" width="1" height="5" fill="#ffcc00"/>
<rect x="166" y="371" width="1" height="5" fill="#ffcc00"/>
<rect x="168" y="371" width="1" height="5" fill="#ffcc00"/>
<rect x="183" y="371" width="1" height="5" fill="#ffcc00"/>
<rect x="192" y="371" width="1" height="5" fill="#ffcc00"/>
<rect x="194" y="371" width="1" height="5" fill="#ffcc00"/>
<rect x="196" y="371" width="1" height="5" fill="#ffcc00"/>
<rect x="208" y="371" width="1" height="5" fill="#ffcc00"/>
<rect x="210" y="371" width="1" height="5" fill="#ffcc00"/>
<rect x="216" y="371" width="1" height="5" fill="#ffcc00"/>
<rect x="218" y="371" width="1" height="5" fill="#ffcc00"/>
<rect x="220" y="371" width="1" height="5" fill="#ffcc00"/>
<rect x="237" y="371" width="1" height="5" fill="#ffcc00"/>
<rect x="239" y="371" width="1" height="5" fill="#ffcc00"/>
<rect x="254" y="371" width="1" height="5" fill="#ffcc00"/>
<rect x="256" y="371" width="1" height="5" fill="#ffcc00"/>
<rect x="270" y="371" width="1" height="5" fill="#ffcc00"/>
<rect x="278" y="371" width="1" height="5" fill="#ffcc00"/>
<rect x="287" y="371" width="1" height="5" fill="#ffcc00"/>
<rect x="298" y="371" width="1" height="5" fill="#ffcc00"/>
<rect x="302" y="371" width="1" height="5" fill="#ffcc00"/>
<rect x="304" y="371" width="1" height="5" fill="#ffcc00"/>
<rect x="306" y="371" width="1" height="5" fill="#ffcc00"/>
<rect x="324" y="371" width="1" height="5" fill="#ffcc00"/>
<rect x="336" y="371" width="1" height="5" fill="#ffcc00"/>
<rect x="338" y="371" width="1" height="5" fill="#ffcc00"/>
<rect x="340" y="371" width="1" height="5" fill="#ffcc00"/>
<rect x="357" y="371" width="1" height="5" fill="#ffcc00"/>
<rect x="359" y="371" width="1" height="5" fill="#ffcc00"/>
<rect x="379" y="371" width="1" height="5" fill="#ffcc00"/>
<rect x="381" y="371" width="1" height="5" fill="#ffcc00"/>
<rect x="387" y="371" width="1" height="5" fill="#ffcc00"/>
<rect x="405" y="371" width="1" height="5" fill="#ffcc00"/>
<rect x="407" y="371" width="1" height="5" fill="#ffcc00"/>
<rect x="409" y="371" width="1" height="5" fill="#ffcc00"/>
<rect x="421" y="371" width="1" height="5" fill="#ffcc00"/>
<rect x="423" y="371" width="1" height="5" fill="#ffcc00"/>
<rect x="425" y="371" width="1" height="5" fill="#ffcc00"/>
<rect x="437" y="371" width="1" height="5" fill="#ffcc00"/>
<rect x="456" y="371" width="1" height="5" fill="#ffcc00"/>
<rect x="458" y="371" width="1" height="5" fill="#ffcc00"/>
<rect x="460" y="371" width="1" height="5" fill="#ffcc00"/>
<rect x="461" y="371" width="1" height="5" fill="#ffcc00"/>
<rect x="467" y="371" width="1" height="5" fill="#ffcc00"/>
<rect x="485" y="371" width="1" height="5" fill="#ffcc00"/>
<rect x="492" y="371" width="1" height="5" fill="#ffcc00"/>
<rect x="494" y="371" width="1" height="5" fill="#ffcc00"/>
<rect x="497" y="371" width="1" height="5" fill="#ffcc00"/>
<rect x="501" y="371" width="1" height="5" fill="#ffcc00"/>
<rect x="522" y="371" width="1" height="5" fill="#ffcc00"/>
<rect x="537" y="371" width="1" height="5" fill="#ffcc00"/>
<rect x="543" y="371" width="1" height="5" fill="#ffcc00"/>
<rect x="559" y="371" width="1" height="5" fill="#ffcc00"/>
<rect x="571" y="371" width="1" height="5" fill="#ffcc00"/>
<rect x="573" y="371" width="1" height="5" fill="#ffcc00"/>
<rect x="586" y="371" width="1" height="5" fill="#ffcc00"/>
<rect x="588" y="371" width="1" height="5" fill="#ffcc00"/>
<rect x="590" y="371" width="1" height="5" fill="#ffcc00"/>
<rect x="593" y="371" width="1" height="5" fill="#ffcc00"/>
<rect x="612" y="371" width="1" height="5" fill="#ffcc00"/>
<rect x="614" y="371" width="1" height="5" fill="#ffcc00"/>
<rect x="616" y="371" width="1" height="5" fill="#ffcc00"/>
<rect x="631" y="371" width="1" height="5" fill="#ffcc00"/>
<rect x="633" y="371" width="1" height="5" fill="#ffcc00"/>
<rect x="635" y="371" width="1" height="5" fill="#ffcc00"/>
<rect x="644" y="371" width="1" height="5" fill="#ffcc00"/>
<rect x="652" y="371" width="1" height="5" fill="#ffcc00"/>
<rect x="666" y="371" width="1" height="5" fill="#ffcc00"/>
<rect x="668" y="371" width="1" height="5" fill="#ffcc00"/>
<rect x="685" y="371" width="1" height="5" fill="#ffcc00"/>
<rect x="705" y="371" width="1" height="5" fill="#ffcc00"/>
<rect x="715" y="371" width="1" height="5" fill="#ffcc00"/>
<rect x="717" y="371" width="1" height="5" fill="#ffcc00"/>
<rect x="723" y="371" width="1" height="5" fill="#ffcc00"/>
<rect x="743" y="371" width="1" height="5" fill="#ffcc00"/>
<rect x="745" y="371" width="1" height="5" fill="#ffcc00"/>
<rect x="749" y="371" width="1" height="5" fill="#ffcc00"/>
<rect x="751" y="371" width="1" height="5" fill="#ffcc00"/>
<rect x="769" y="371" width="1" height="5" fill="#ffcc00"/>
<rect x="771" y="371" width="1" height="5" fill="#ffcc00"/>
<rect x="38" y="371" width="4" height="5" fill="#000"/>
<rect x="37" y="371" width="1" height="101" fill="#b89000"/>
<rect x="42" y="371" width="1" height="101" fill="#b89000"/>
<rect x="37" y="470" width="6" height="2" fill="#ffcc00"/>
<rect x="101" y="371" width="3" height="5" fill="#000"/>
<rect x="100" y="371" width="1" height="101" fill="#b89000"/>
<rect x="104" y="371" width="1" height="101" fill="#b89000"/>
<rect x="100" y="470" width="5" height="2" fill="#ffcc00"/>
<rect x="165" y="371" width="2" height="5" fill="#000"/>
<rect x="164" y="371" width="1" height="101" fill="#b89000"/>
<rect x="167" y="371" width="1" height="101" fill="#b89000"/>
<rect x="164" y="470" width="4" height="2" fill="#ffcc00"/>
<rect x="227" y="371" width="2" height="5" fill="#000"/>
<rect x="226" y="371" width="1" height="101" fill="#b89000"/>
<rect x="229" y="371" width="1" height="101" fill="#b89000"/>
<rect x="226" y="470" width="4" height="2" fill="#ffcc00"/>
<rect x="290" y="371" width="1" height="5" fill="#000"/>
<rect x="289" y="371" width="1" height="101" fill="#b89000"/>
<rect x="291" y="371" width="1" height="101" fill="#b89000"/>
<rect x="289" y="470" width="3" height="2" fill="#ffcc00"/>
<rect x="352" y="371" width="1" height="5" fill="#000"/>
<rect x="351" y="371" width="1" height="101" fill="#b89000"/>
<rect x="353" y="371" width="1" height="101" fill="#b89000"/>
<rect x="351" y="470" width="3" height="2" fill="#ffcc00"/>
<rect x="39" y="466" width="1" height="4" fill="#ffcc00"/>
<rect x="25" y="364" width="749" height="2" fill="#00f0f0"/>
<rect x="28" y="366" width="1" height="3" fill="#00f0f0"/>
<rect x="34" y="366" width="1" height="3" fill="#00f0f0"/>
<rect x="36" y="366" width="1" height="3" fill="#00f0f0"/>
<rect x="74" y="366" width="1" height="3" fill="#00f0f0"/>
<rect x="78" y="366" width="1" height="3" fill="#00f0f0"/>
<rect x="96" y="366" width="1" height="3" fill="#00f0f0"/>
<rect x="99" y="366" width="1" height="3" fill="#00f0f0"/>
<rect x="124" y="366" width="1" height="3" fill="#00f0f0"/>
<rect x="129" y="366" width="1" height="3" fill="#00f0f0"/>
<rect x="138" y="366" width="1" height="3" fill="#00f0f0"/>
<rect x="148" y="366" width="1" height="3" fill="#00f0f0"/>
<rect x="151" y="366" width="1" height="3" fill="#00f0f0"/>
<rect x="156" y="366" width="1" height="3" fill="#00f0f0"/>
<rect x="163" y="366" width="1" height="3" fill="#00f0f0"/>
<rect x="176" y="366" width="1" height="3" fill="#00f0f0"/>
<rect x="184" y="366" width="1" height="3" fill="#00f0f0"/>
<rect x="199" y="366" width="1" height="3" fill="#00f0f0"/>
<rect x="220" y="366" width="1" height="3" fill="#00f0f0"/>
<rect x="253" y="366" width="1" height="3" fill="#00f0f0"/>
<rect x="255" y="366" width="1" height="3" fill="#00f0f0"/>
<rect x="310" y="366" width="1" height="3" fill="#00f0f0"/>
<rect x="328" y="366" width="1" height="3" fill="#00f0f0"/>
<rect x="335" y="366" width="1" height="3" fill="#00f0f0"/>
<rect x="377" y="366" width="1" height="3" fill="#00f0f0"/>
<rect x="388" y="366" width="1" height="3" fill="#00f0f0"/>
<rect x="408" y="366" width="1" height="3" fill="#00f0f0"/>
<rect x="409" y="366" width="1" height="3" fill="#00f0f0"/>
<rect x="452" y="366" width="1" height="3" fill="#00f0f0"/>
<rect x="468" y="366" width="1" height="3" fill="#00f0f0"/>
<rect x="479" y="366" width="1" height="3" fill="#00f0f0"/>
<rect x="540" y="366" width="1" height="3" fill="#00f0f0"/>
<rect x="552" y="366" width="1" height="3" fill="#00f0f0"/>
<rect x="558" y="366" width="1" height="3" fill="#00f0f0"/>
<rect x="560" y="366" width="1" height="3" fill="#00f0f0"/>
<rect x="578" y="366" width="1" height="3" fill="#00f0f0"/>
<rect x="588" y="366" width="1" height="3" fill="#00f0f0"/>
<rect x="600" y="366" width="1" height="3" fill="#00f0f0"/>
<rect x="619" y="366" width="1" height="3" fill="#00f0f0"/>
<rect x="626" y="366" width="1" height="3" fill="#00f0f0"/>
<rect x="629" y="366" width="1" height="3" fill="#00f0f0"/>
<rect x="633" y="366" width="1" height="3" fill="#00f0f0"/>
<rect x="643" y="366" width="1" height="3" fill="#00f0f0"/>
<rect x="662" y="366" width="1" height="3" fill="#00f0f0"/>
<rect x="671" y="366" width="1" height="3" fill="#00f0f0"/>
<rect x="680" y="366" width="1" height="3" fill="#00f0f0"/>
<rect x="684" y="366" width="1" height="3" fill="#00f0f0"/>
<rect x="686" y="366" width="1" height="3" fill="#00f0f0"/>
<rect x="727" y="366" width="1" height="3" fill="#00f0f0"/>
<rect x="746" y="366" width="1" height="3" fill="#00f0f0"/>
<rect x="748" y="366" width="1" height="3" fill="#00f0f0"/>
<rect x="769" y="366" width="1" height="3" fill="#00f0f0"/>
<rect x="38" y="364" width="4" height="2" fill="#000"/>
<rect x="37" y="270" width="1" height="96" fill="#00adad"/>
<rect x="42" y="270" width="1" height="96" fill="#00adad"/>
<rect x="37" y="270" width="6" height="3" fill="#00f0f0"/>
<rect x="101" y="364" width="3" height="2" fill="#000"/>
<rect x="100" y="270" width="1" height="96" fill="#00adad"/>
<rect x="104" y="270" width="1" height="96" fill="#00adad"/>
<rect x="100" y="270" width="5" height="3" fill="#00f0f0"/>
<rect x="165" y="364" width="2" height="2" fill="#000"/>
<rect x="164" y="270" width="1" height="96" fill="#00adad"/>
<rect x="167" y="270" width="1" height="96" fill="#00adad"/>
<rect x="164" y="270" width="4" height="3" fill="#00f0f0"/>
<rect x="227" y="364" width="2" height="2" fill="#000"/>
<rect x="226" y="270" width="1" height="96" fill="#00adad"/>
<rect x="229" y="270" width="1" height="96" fill="#00adad"/>
<rect x="226" y="270" width="4" height="3" fill="#00f0f0"/>
<rect x="290" y="364" width="1" height="2" fill="#000"/>
<rect x="289" y="270" width="1" height="96" fill="#00adad"/>
<rect x="291" y="270" width="1" height="96" fill="#00adad"/>
<rect x="289" y="270" width="3" height="3" fill="#00f0f0"/>
<rect x="352" y="364" width="1" height="2" fill="#000"/>
<rect x="351" y="270" width="1" height="96" fill="#00adad"/>
<rect x="353" y="270" width="1" height="96" fill="#00adad"/>
<rect x="351" y="270" width="3" height="3" fill="#00f0f0"/>
<rect x="99" y="51" width="1" height="1" fill="#969696"/>
<rect x="99" y="63" width="1" height="1" fill="#969696"/>
<rect x="99" y="75" width="1" height="1" fill="#969696"/>
<rect x="99" y="87" width="1" height="1" fill="#969696"/>
<rect x="99" y="99" width="1" height="1" fill="#969696"/>
<rect x="99" y="111" width="1" height="1" fill="#969696"/>
<rect x="99" y="123" width="1" height="1" fill="#969696"/>
<rect x="99" y="135" width="1" height="1" fill="#969696"/>
<rect x="99" y="147" width="1" height="1" fill="#969696"/>
<rect x="99" y="159" width="1" height="1" fill="#969696"/>
<rect x="99" y="171" width="1" height="1" fill="#969696"/>
<rect x="99" y="183" width="1" height="1" fill="#969696"/>
<rect x="99" y="195" width="1" height="1" fill="#969696"/>
<rect x="99" y="207" width="1" height="1" fill="#969696"/>
<rect x="99" y="219" width="1" height="1" fill="#969696"/>
<rect x="99" y="231" width="1" height="1" fill="#969696"/>
<rect x="99" y="243" width="1" height="1" fill="#969696"/>
<rect x="99" y="255" width="1" height="1" fill="#969696"/>
<rect x="99" y="267" width="1" height="1" fill="#969696"/>
<rect x="99" y="279" width="1" height="1" fill="#969696"/>
<rect x="99" y="291" width="1" height="1" fill="#969696"/>
<rect x="99" y="303" width="1" height="1" fill="#969696"/>
<rect x="99" y="315" width="1" height="1" fill="#969696"/>
<rect x="99" y="327" width="1" height="1" fill="#969696"/>
<rect x="99" y="339" width="1" height="1" fill="#969696"/>
<rect x="99" y="351" width="1" height="1" fill="#969696"/>
<rect x="99" y="363" width="1" height="1" fill="#969696"/>
<rect x="99" y="375" width="1" height="1" fill="#969696"/>
<rect x="99" y="387" width="1" height="1" fill="#969696"/>
<rect x="99" y="399" width="1" height="1" fill="#969696"/>
<rect x="99" y="411" width="1" height="1" fill="#969696"/>
<rect x="99" y="423" width="1" height="1" fill="#969696"/>
<rect x="99" y="435" width="1" height="1" fill="#969696"/>
<rect x="99" y="447" width="1" height="1" fill="#969696"/>
<rect x="99" y="459" width="1" height="1" fill="#969696"/>
<rect x="99" y="471" width="1" height="1" fill="#969696"/>
<rect x="99" y="483" width="1" height="1" fill="#969696"/>
<rect x="99" y="495" width="1" height="1" fill="#969696"/>
<rect x="99" y="507" width="1" height="1" fill="#969696"/>
<rect x="174" y="51" width="1" height="1" fill="#969696"/>
<rect x="174" y="63" width="1" height="1" fill="#969696"/>
<rect x="174" y="75" width="1" height="1" fill="#969696"/>
<rect x="174" y="87" width="1" height="1" fill="#969696"/>
<rect x="174" y="99" width="1" height="1" fill="#969696"/>
<rect x="174" y="111" width="1" height="1" fill="#969696"/>
<rect x="174" y="123" width="1" height="1" fill="#969696"/>
<rect x="174" y="135" width="1" height="1" fill="#969696"/>
<rect x="174" y="147" width="1" height="1" fill="#969696"/>
<rect x="174" y="159" width="1" height="1" fill="#969696"/>
<rect x="174" y="171" width="1" height="1" fill="#969696"/>
<rect x="174" y="183" width="1" height="1" fill="#969696"/>
<rect x="174" y="195" width="1" height="1" fill="#969696"/>
<rect x="174" y="207" width="1" height="1" fill="#969696"/>
<rect x="174" y="219" width="1" height="1" fill="#969696"/>
<rect x="174" y="231" width="1" height="1" fill="#969696"/>
<rect x="174" y="243" width="1" height="1" fill="#969696"/>
<rect x="174" y="255" width="1" height="1" fill="#969696"/>
<rect x="174" y="267" width="1" height="1" fill="#969696"/>
<rect x="174" y="279" width="1" height="1" fill="#969696"/>
<rect x="174" y="291" width="1" height="1" fill="#969696"/>
<rect x="174" y="303" width="1" height="1" fill="#969696"/>
<rect x="174" y="315" width="1" height="1" fill="#969696"/>
<rect x="174" y="327" width="1" height="1" fill="#969696"/>
<rect x="174" y="339" width="1" height="1" fill="#969696"/>
<rect x="174" y="351" width="1" height="1" fill="#969696"/>
<rect x="174" y="363" width="1" height="1" fill="#969696"/>
<rect x="174" y="375" width="1" height="1" fill="#969696"/>
<rect x="174" y="387" width="1" height="1" fill="#969696"/>
<rect x="174" y="399" width="1" height="1" fill="#969696"/>
<rect x="174" y="411" width="1" height="1" fill="#969696"/>
<rect x="174" y="423" width="1" height="1" fill="#969696"/>
<rect x="174" y="435" width="1" height="1" fill="#969696"/>
<rect x="174" y="447" width="1" height="1" fill="#969696"/>
<rect x="174" y="459" width="1" height="1" fill="#969696"/>
<rect x="174" y="471" width="1" height="1" fill="#969696"/>
<rect x="174" y="483" width="1" height="1" fill="#969696"/>
<rect x="174" y="495" width="1" height="1" fill="#969696"/>
<rect x="174" y="507" width="1" height="1" fill="#969696"/>
<rect x="249" y="51" width="1" height="1" fill="#969696"/>
<rect x="249" y="63" width="1" height="1" fill="#969696"/>
<rect x="249" y="75" width="1" height="1" fill="#969696"/>
<rect x="249" y="87" width="1" height="1" fill="#969696"/>
<rect x="249" y="99" width="1" height="1" fill="#969696"/>
<rect x="249" y="111" width="1" height="1" fill="#969696"/>
<rect x="249" y="123" width="1" height="1" fill="#969696"/>
<rect x="249" y="135" width="1" height="1" fill="#969696"/>
<rect x="249" y="147" width="1" height="1" fill="#969696"/>
<rect x="249" y="159" width="1" height="1" fill="#969696"/>
<rect x="249" y="171" width="1" height="1" fill="#969696"/>
<rect x="249" y="183" width="1" height="1" fill="#969696"/>
<rect x="249" y="195" width="1" height="1" fill="#969696"/>
<rect x="249" y="207" width="1" height="1" fill="#969696"/>
<rect x="249" y="219" width="1" height="1" fill="#969696"/>
<rect x="249" y="231" width="1" height="1" fill="#969696"/>
<rect x="249" y="243" width="1" height="1" fill="#969696"/>
<rect x="249" y="255" width="1" height="1" fill="#969696"/>
<rect x="249" y="267" width="1" height="1" fill="#969696"/>
<rect x="249" y="279" width="1" height="1" fill="#969696"/>
<rect x="249" y="291" width="1" height="1" fill="#969696"/>
<rect x="249" y="303" width="1" height="1" fill="#969696"/>
<rect x="249" y="315" width="1" height="1" fill="#969696"/>
<rect x="249" y="327" width="1" height="1" fill="#969696"/>
<rect x="249" y="339" width="1" height="1" fill="#969696"/>
<rect x="249" y="351" width="1" height="1" fill="#969696"/>
<rect x="249" y="363" width="1" height="1" fill="#969696"/>
<rect x="249" y="375" width="1" height="1" fill="#969696"/>
<rect x="249" y="387" width="1" height="1" fill="#969696"/>
<rect x="249" y="399" width="1" height="1" fill="#969696"/>
<rect x="249" y="411" width="1" height="1" fill="#969696"/>
<rect x="249" y="423" width="1" height="1" fill="#969696"/>
<rect x="249" y="435" width="1" height="1" fill="#969696"/>
<rect x="249" y="447" width="1" height="1" fill="#969696"/>
<rect x="249" y="459" width="1" height="1" fill="#969696"/>
<rect x="249" y="471" width="1" height="1" fill="#969696"/>
<rect x="249" y="483" width="1" height="1" fill="#969696"/>
<rect x="249" y="495" width="1" height="1" fill="#969696"/>
<rect x="249" y="507" width="1" height="1" fill="#969696"/>
<rect x="324" y="51" width="1" height="1" fill="#969696"/>
<rect x="324" y="63" width="1" height="1" fill="#969696"/>
<rect x="324" y="75" width="1" height="1" fill="#969696"/>
<rect x="324" y="87" width="1" height="1" fill="#969696"/>
<rect x="324" y="99" width="1" height="1" fill="#969696"/>
<rect x="324" y="111" width="1" height="1" fill="#969696"/>
<rect x="324" y="123" width="1" height="1" fill="#969696"/>
<rect x="324" y="135" width="1" height="1" fill="#969696"/>
<rect x="324" y="147" width="1" height="1" fill="#969696"/>
<rect x="324" y="159" width="1" height="1" fill="#969696"/>
<rect x="324" y="171" width="1" height="1" fill="#969696"/>
<rect x="324" y="183" width="1" height="1" fill="#969696"/>
<rect x="324" y="195" width="1" height="1" fill="#969696"/>
<rect x="324" y="207" width="1" height="1" fill="#969696"/>
<rect x="324" y="219" width="1" height="1" fill="#969696"/>
<rect x="324" y="231" width="1" height="1" fill="#969696"/>
<rect x="324" y="243" width="1" height="1" fill="#969696"/>
<rect x="324" y="255" width="1" height="1" fill="#969696"/>
<rect x="324" y="267" width="1" height="1" fill="#969696"/>
<rect x="324" y="279" width="1" height="1" fill="#969696"/>
<rect x="324" y="291" width="1" height="1" fill="#969696"/>
<rect x="324" y="303" width="1" height="1" fill="#969696"/>
<rect x="324" y="315" width="1" height="1" fill="#969696"/>
<rect x="324" y="327" width="1" height="1" fill="#969696"/>
<rect x="324" y="339" width="1" height="1" fill="#969696"/>
<rect x="324" y="351" width="1" height="1" fill="#969696"/>
<rect x="324" y="363" width="1" height="1" fill="#969696"/>
<rect x="324" y="375" width="1" height="1" fill="#969696"/>
<rect x="324" y="387" width="1" height="1" fill="#969696"/>
<rect x="324" y="399" width="1" height="1" fill="#969696"/>
<rect x="324" y="411" width="1" height="1" fill="#969696"/>
<rect x="324" y="423" width="1" height="1" fill="#969696"/>
<rect x="324" y="435" width="1" height="1" fill="#969696"/>
<rect x="324" y="447" width="1" height="1" fill="#969696"/>
<rect x="324" y="459" width="1" height="1" fill="#969696"/>
<rect x="324" y="471" width="1" height="1" fill="#969696"/>
<rect x="324" y="483" width="1" height="1" fill="#969696"/>
<rect x="324" y="495" width="1" height="1" fill="#969696"/>
<rect x="324" y="507" width="1" height="1" fill="#969696"/>
<rect x="474" y="51" width="1" height="1" fill="#969696"/>
<rect x="474" y="63" width="1" height="1" fill="#969696"/>
<rect x="474" y="75" width="1" height="1" fill="#969696"/>
<rect x="474" y="87" width="1" height="1" fill="#969696"/>
<rect x="474" y="99" width="1" height="1" fill="#969696"/>
<rect x="474" y="111" width="1" height="1" fill="#969696"/>
<rect x="474" y="123" width="1" height="1" fill="#969696"/>
<rect x="474" y="135" width="1" height="1" fill="#969696"/>
<rect x="474" y="147" width="1" height="1" fill="#969696"/>
<rect x="474" y="159" width="1" height="1" fill="#969696"/>
<rect x="474" y="171" width="1" height="1" fill="#969696"/>
<rect x="474" y="183" width="1" height="1" fill="#969696"/>
<rect x="474" y="195" width="1" height="1" fill="#969696"/>
<rect x="474" y="207" width="1" height="1" fill="#969696"/>
<rect x="474" y="219" width="1" height="1" fill="#969696"/>
<rect x="474" y="231" width="1" height="1" fill="#969696"/>
<rect x="474" y="243" width="1" height="1" fill="#969696"/>
<rect x="474" y="255" width="1" height="1" fill="#969696"/>
<rect x="474" y="267" width="1" height="1" fill="#969696"/>
<rect x="474" y="279" width="1" height="1" fill="#969696"/>
<rect x="474" y="291" width="1" height="1" fill="#969696"/>
<rect x="474" y="303" width="1" height="1" fill="#969696"/>
<rect x="474" y="315" width="1" height="1" fill="#969696"/>
<rect x="474" y="327" width="1" height="1" fill="#969696"/>
<rect x="474" y="339" width="1" height="1" fill="#969696"/>
<rect x="474" y="351" width="1" height="1" fill="#969696"/>
<rect x="474" y="363" width="1" height="1" fill="#969696"/>
<rect x="474" y="375" width="1" height="1" fill="#969696"/>
<rect x="474" y="387" width="1" height="1" fill="#969696"/>
<rect x="474" y="399" width="1" height="1" fill="#969696"/>
<rect x="474" y="411" width="1" height="1" fill="#969696"/>
<rect x="474" y="423" width="1" height="1" fill="#969696"/>
<rect x="474" y="435" width="1" height="1" fill="#969696"/>
<rect x="474" y="447" width="1" height="1" fill="#969696"/>
<rect x="474" y="459" width="1" height="1" fill="#969696"/>
<rect x="474" y="471" width="1" height="1" fill="#969696"/>
<rect x="474" y="483" width="1" height="1" fill="#969696"/>
<rect x="474" y="495" width="1" height="1" fill="#969696"/>
<rect x="474" y="507" width="1" height="1" fill="#969696"/>
<rect x="549" y="51" width="1" height="1" fill="#969696"/>
<rect x="549" y="63" width="1" height="1" fill="#969696"/>
<rect x="549" y="75" width="1" height="1" fill="#969696"/>
<rect x="549" y="87" width="1" height="1" fill="#969696"/>
<rect x="549" y="99" width="1" height="1" fill="#969696"/>
<rect x="549" y="111" width="1" height="1" fill="#969696"/>
<rect x="549" y="123" width="1" height="1" fill="#969696"/>
<rect x="549" y="135" width="1" height="1" fill="#969696"/>
<rect x="549" y="147" width="1" height="1" fill="#969696"/>
<rect x="549" y="159" width="1" height="1" fill="#969696"/>
<rect x="549" y="171" width="1" height="1" fill="#969696"/>
<rect x="549" y="183" width="1" height="1" fill="#969696"/>
<rect x="549" y="195" width="1" height="1" fill="#969696"/>
<rect x="549" y="207" width="1" height="1" fill="#969696"/>
<rect x="549" y="219" width="1" height="1" fill="#969696"/>
<rect x="549" y="231" width="1" height="1" fill="#969696"/>
<rect x="549" y="243" width="1" height="1" fill="#969696"/>
<rect x="549" y="255" width="1" height="1" fill="#969696"/>
<rect x="549" y="267" width="1" height="1" fill="#969696"/>
<rect x="549" y="279" width="1" height="1" fill="#969696"/>
<rect x="549" y="291" width="1" height="1" fill="#969696"/>
<rect x="549" y="303" width="1" height="1" fill="#969696"/>
<rect x="549" y="315" width="1" height="1" fill="#969696"/>
<rect x="549" y="327" width="1" height="1" fill="#969696"/>
<rect x="549" y="339" width="1" height="1" fill="#969696"/>
<rect x="549" y="351" width="1" height="1" fill="#969696"/>
<rect x="549" y="363" width="1" height="1" fill="#969696"/>
<rect x="549" y="375" width="1" height="1" fill="#969696"/>
<rect x="549" y="387" width="1" height="1" fill="#969696"/>
<rect x="549" y="399" width="1" height="1" fill="#969696"/>
<rect x="549" y="411" width="1" height="1" fill="#969696"/>
<rect x="549" y="423" width="1" height="1" fill="#969696"/>
<rect x="549" y="435" width="1" height="1" fill="#969696"/>
<rect x="549" y="447" width="1" height="1" fill="#969696"/>
<rect x="549" y="459" width="1" height="1" fill="#969696"/>
<rect x="549" y="471" width="1" height="1" fill="#969696"/>
<rect x="549" y="483" width="1" height="1" fill="#969696"/>
<rect x="549" y="495" width="1" height="1" fill="#969696"/>
<rect x="549" y="507" width="1" height="1" fill="#969696"/>
<rect x="624" y="51" width="1" height="1" fill="#969696"/>
<rect x="624" y="63" width="1" height="1" fill="#969696"/>
<rect x="624" y="75" width="1" height="1" fill="#969696"/>
<rect x="624" y="87" width="1" height="1" fill="#969696"/>
<rect x="624" y="99" width="1" height="1" fill="#969696"/>
<rect x="624" y="111" width="1" height="1" fill="#969696"/>
<rect x="624" y="123" width="1" height="1" fill="#969696"/>
<rect x="624" y="135" width="1" height="1" fill="#969696"/>
<rect x="624" y="147" width="1" height="1" fill="#969696"/>
<rect x="624" y="159" width="1" height="1" fill="#969696"/>
<rect x="624" y="171" width="1" height="1" fill="#969696"/>
<rect x="624" y="183" width="1" height="1" fill="#969696"/>
<rect x="624" y="195" width="1" height="1" fill="#969696"/>
<rect x="624" y="207" width="1" height="1" fill="#969696"/>
<rect x="624" y="219" width="1" height="1" fill="#969696"/>
<rect x="624" y="231" width="1" height="1" fill="#969696"/>
<rect x="624" y="243" width="1" height="1" fill="#969696"/>
<rect x="624" y="255" width="1" height="1" fill="#969696"/>
<rect x="624" y="267" width="1" height="1" fill="#969696"/>
<rect x="624" y="279" width="1" height="1" fill="#969696"/>
<rect x="624" y="291" width="1" height="1" fill="#969696"/>
<rect x="624" y="303" width="1" height="1" fill="#969696"/>
<rect x="624" y="315" width="1" height="1" fill="#969696"/>
<rect x="624" y="327" width="1" height="1" fill="#969696"/>
<rect x="624" y="339" width="1" height="1" fill="#969696"/>
<rect x="624" y="351" width="1" height="1" fill="#969696"/>
<rect x="624" y="363" width="1" height="1" fill="#969696"/>
<rect x="624" y="375" width="1" height="1" fill="#969696"/>
<rect x="624" y="387" width="1" height="1" fill="#969696"/>
<rect x="624" y="399" width="1" height="1" fill="#969696"/>
<rect x="624" y="411" width="1" height="1" fill="#969696"/>
<rect x="624" y="423" width="1" height="1" fill="#969696"/>
<rect x="624" y="435" width="1" height="1" fill="#969696"/>
<rect x="624" y="447" width="1" height="1" fill="#969696"/>
<rect x="624" y="459" width="1" height="1" fill="#969696"/>
<rect x="624" y="471" width="1" height="1" fill="#969696"/>
<rect x="624" y="483" width="1" height="1" fill="#969696"/>
<rect x="624" y="495" width="1" height="1" fill="#969696"/>
<rect x="624" y="507" width="1" height="1" fill="#969696"/>
<rect x="699" y="51" width="1" height="1" fill="#969696"/>
<rect x="699" y="63" width="1" height="1" fill="#969696"/>
<rect x="699" y="75" width="1" height="1" fill="#969696"/>
<rect x="699" y="87" width="1" height="1" fill="#969696"/>
<rect x="699" y="99" width="1" height="1" fill="#969696"/>
<rect x="699" y="111" width="1" height="1" fill="#969696"/>
<rect x="699" y="123" width="1" height="1" fill="#969696"/>
<rect x="699" y="135" width="1" height="1" fill="#969696"/>
<rect x="699" y="147" width="1" height="1" fill="#969696"/>
<rect x="699" y="159" width="1" height="1" fill="#969696"/>
<rect x="699" y="171" width="1" height="1" fill="#969696"/>
<rect x="699" y="183" width="1" height="1" fill="#969696"/>
<rect x="699" y="195" width="1" height="1" fill="#969696"/>
<rect x="699" y="207" width="1" height="1" fill="#969696"/>
<rect x="699" y="219" width="1" height="1" fill="#969696"/>
<rect x="699" y="231" width="1" height="1" fill="#969696"/>
<rect x="699" y="243" width="1" height="1" fill="#969696"/>
<rect x="699" y="255" width="1" height="1" fill="#969696"/>
<rect x="699" y="267" width="1" height="1" fill="#969696"/>
<rect x="699" y="279" width="1" height="1" fill="#969696"/>
<rect x="699" y="291" width="1" height="1" fill="#969696"/>
<rect x="699" y="303" width="1" height="1" fill="#969696"/>
<rect x="699" y="315" width="1" height="1" fill="#969696"/>
<rect x="699" y="327" width="1" height="1" fill="#969696"/>
<rect x="699" y="339" width="1" height="1" fill="#969696"/>
<rect x="699" y="351" width="1" height="1" fill="#969696"/>
<rect x="699" y="363" width="1" height="1" fill="#969696"/>
<rect x="699" y="375" width="1" height="1" fill="#969696"/>
<rect x="699" y="387" width="1" height="1" fill="#969696"/>
<rect x="699" y="399" width="1" height="1" fill="#969696"/>
<rect x="699" y="411" width="1" height="1" fill="#969696"/>
<rect x="699" y="423" width="1" height="1" fill="#969696"/>
<rect x="699" y="435" width="1" height="1" fill="#969696"/>
<rect x="699" y="447" width="1" height="1" fill="#969696"/>
<rect x="699" y="459" width="1" height="1" fill="#969696"/>
<rect x="699" y="471" width="1" height="1" fill="#969696"/>
<rect x="699" y="483" width="1" height="1" fill="#969696"/>
<rect x="699" y="495" width="1" height="1" fill="#969696"/>
<rect x="699" y="507" width="1" height="1" fill="#969696"/>
<rect x="39" y="99" width="1" height="1" fill="#969696"/>
<rect x="54" y="99" width="1" height="1" fill="#969696"/>
<rect x="69" y="99" width="1" height="1" fill="#969696"/>
<rect x="84" y="99" width="1" height="1" fill="#969696"/>
<rect x="99" y="99" width="1" height="1" fill="#969696"/>
<rect x="114" y="99" width="1" height="1" fill="#969696"/>
<rect x="129" y="99" width="1" height="1" fill="#969696"/>
<rect x="144" y="99" width="1" height="1" fill="#969696"/>
<rect x="159" y="99" width="1" height="1" fill="#969696"/>
<rect x="174" y="99" width="1" height="1" fill="#969696"/>
<rect x="189" y="99" width="1" height="1" fill="#969696"/>
<rect x="204" y="99" width="1" height="1" fill="#969696"/>
<rect x="219" y="99" width="1" height="1" fill="#969696"/>
<rect x="234" y="99" width="1" height="1" fill="#969696"/>
<rect x="249" y="99" width="1" height="1" fill="#969696"/>
<rect x="264" y="99" width="1" height="1" fill="#969696"/>
<rect x="279" y="99" width="1" height="1" fill="#969696"/>
<rect x="294" y="99" width="1" height="1" fill="#969696"/>
<rect x="309" y="99" width="1" height="1" fill="#969696"/>
<rect x="324" y="99" width="1" height="1" fill="#969696"/>
<rect x="339" y="99" width="1" height="1" fill="#969696"/>
<rect x="354" y="99" width="1" height="1" fill="#969696"/>
<rect x="369" y="99" width="1" height="1" fill="#969696"/>
<rect x="384" y="99" width="1" height="1" fill="#969696"/>
<rect x="399" y="99" width="1" height="1" fill="#969696"/>
<rect x="414" y="99" width="1" height="1" fill="#969696"/>
<rect x="429" y="99" width="1" height="1" fill="#969696"/>
<rect x="444" y="99" width="1" height="1" fill="#969696"/>
<rect x="459" y="99" width="1" height="1" fill="#969696"/>
<rect x="474" y="99" width="1" height="1" fill="#969696"/>
<rect x="489" y="99" width="1" height="1" fill="#969696"/>
<rect x="504" y="99" width="1" height="1" fill="#969696"/>
<rect x="519" y="99" width="1" height="1" fill="#969696"/>
<rect x="534" y="99" width="1" height="1" fill="#969696"/>
<rect x="549" y="99" width="1" height="1" fill="#969696"/>
<rect x="564" y="99" width="1" height="1" fill="#969696"/>
<rect x="579" y="99" width="1" height="1" fill="#969696"/>
<rect x="594" y="99" width="1" height="1" fill="#969696"/>
<rect x="609" y="99" width="1" height="1" fill="#969696"/>
<rect x="624" y="99" width="1" height="1" fill="#969696"/>
<rect x="639" y="99" width="1" height="1" fill="#969696"/>
<rect x="654" y="99" width="1" height="1" fill="#969696"/>
<rect x="669" y="99" width="1" height="1" fill="#969696"/>
<rect x="684" y="99" width="1" height="1" fill="#969696"/>
<rect x="699" y="99" width="1" height="1" fill="#969696"/>
<rect x="714" y="99" width="1" height="1" fill="#969696"/>
<rect x="729" y="99" width="1" height="1" fill="#969696"/>
<rect x="744" y="99" width="1" height="1" fill="#969696"/>
<rect x="759" y="99" width="1" height="1" fill="#969696"/>
<rect x="39" y="159" width="1" height="1" fill="#969696"/>
<rect x="54" y="159" width="1" height="1" fill="#969696"/>
<rect x="69" y="159" width="1" height="1" fill="#969696"/>
<rect x="84" y="159" width="1" height="1" fill="#969696"/>
<rect x="99" y="159" width="1" height="1" fill="#969696"/>
<rect x="114" y="159" width="1" height="1" fill="#969696"/>
<rect x="129" y="159" width="1" height="1" fill="#969696"/>
<rect x="144" y="159" width="1" height="1" fill="#969696"/>
<rect x="159" y="159" width="1" height="1" fill="#969696"/>
<rect x="174" y="159" width="1" height="1" fill="#969696"/>
<rect x="189" y="159" width="1" height="1" fill="#969696"/>
<rect x="204" y="159" width="1" height="1" fill="#969696"/>
<rect x="219" y="159" width="1" height="1" fill="#969696"/>
<rect x="234" y="159" width="1" height="1" fill="#969696"/>
<rect x="249" y="159" width="1" height="1" fill="#969696"/>
<rect x="264" y="159" width="1" height="1" fill="#969696"/>
<rect x="279" y="159" width="1" height="1" fill="#969696"/>
<rect x="294" y="159" width="1" height="1" fill="#969696"/>
<rect x="309" y="159" width="1" height="1" fill="#969696"/>
<rect x="324" y="159" width="1" height="1" fill="#969696"/>
<rect x="339" y="159" width="1" height="1" fill="#969696"/>
<rect x="354" y="159" width="1" height="1" fill="#969696"/>
<rect x="369" y="159" width="1" height="1" fill="#969696"/>
<rect x="384" y="159" width="1" height="1" fill="#969696"/>
<rect x="399" y="159" width="1" height="1" fill="#969696"/>
<rect x="414" y="159" width="1" height="1" fill="#969696"/>
<rect x="429" y="159" width="1" height="1" fill="#969696"/>
<rect x="444" y="159" width="1" height="1" fill="#969696"/>
<rect x="459" y="159" width="1" height="1" fill="#969696"/>
<rect x="474" y="159" width="1" height="1" fill="#969696"/>
<rect x="489" y="159" width="1" height="1" fill="#969696"/>
<rect x="504" y="159" width="1" height="1" fill="#969696"/>
<rect x="519" y="159" width="1" height="1" fill="#969696"/>
<rect x="534" y="159" width="1" height="1" fill="#969696"/>
<rect x="549" y="159" width="1" height="1" fill="#969696"/>
<rect x="564" y="159" width="1" height="1" fill="#969696"/>
<rect x="579" y="159" width="1" height="1" fill="#969696"/>
<rect x="594" y="159" width="1" height="1" fill="#969696"/>
<rect x="609" y="159" width="1" height="1" fill="#969696"/>
<rect x="624" y="159" width="1" height="1" fill="#969696"/>
<rect x="639" y="159" width="1" height="1" fill="#969696"/>
<rect x="654" y="159" width="1" height="1" fill="#969696"/>
<rect x="669" y="159" width="1" height="1" fill="#969696"/>
<rect x="684" y="159" width="1" height="1" fill="#969696"/>
<rect x="699" y="159" width="1" height="1" fill="#969696"/>
<rect x="714" y="159" width="1" height="1" fill="#969696"/>
<rect x="729" y="159" width="1" height="1" fill="#969696"/>
<rect x="744" y="159" width="1" height="1" fill="#969696"/>
<rect x="759" y="159" width="1" height="1" fill="#969696"/>
<rect x="39" y="219" width="1" height="1" fill="#969696"/>
<rect x="54" y="219" width="1" height="1" fill="#969696"/>
<rect x="69" y="219" width="1" height="1" fill="#969696"/>
<rect x="84" y="219" width="1" height="1" fill="#969696"/>
<rect x="99" y="219" width="1" height="1" fill="#969696"/>
<rect x="114" y="219" width="1" height="1" fill="#969696"/>
<rect x="129" y="219" width="1" height="1" fill="#969696"/>
<rect x="144" y="219" width="1" height="1" fill="#969696"/>
<rect x="159" y="219" width="1" height="1" fill="#969696"/>
<rect x="174" y="219" width="1" height="1" fill="#969696"/>
<rect x="189" y="219" width="1" height="1" fill="#969696"/>
<rect x="204" y="219" width="1" height="1" fill="#969696"/>
<rect x="219" y="219" width="1" height="1" fill="#969696"/>
<rect x="234" y="219" width="1" height="1" fill="#969696"/>
<rect x="249" y="219" width="1" height="1" fill="#969696"/>
<rect x="264" y="219" width="1" height="1" fill="#969696"/>
<rect x="279" y="219" width="1" height="1" fill="#969696"/>
<rect x="294" y="219" width="1" height="1" fill="#969696"/>
<rect x="309" y="219" width="1" height="1" fill="#969696"/>
<rect x="324" y="219" width="1" height="1" fill="#969696"/>
<rect x="339" y="219" width="1" height="1" fill="#969696"/>
<rect x="354" y="219" width="1" height="1" fill="#969696"/>
<rect x="369" y="219" width="1" height="1" fill="#969696"/>
<rect x="384" y="219" width="1" height="1" fill="#969696"/>
<rect x="399" y="219" width="1" height="1" fill="#969696"/>
<rect x="414" y="219" width="1" height="1" fill="#969696"/>
<rect x="429" y="219" width="1" height="1" fill="#969696"/>
<rect x="444" y="219" width="1" height="1" fill="#969696"/>
<rect x="459" y="219" width="1" height="1" fill="#969696"/>
<rect x="474" y="219" width="1" height="1" fill="#969696"/>
<rect x="489" y="219" width="1" height="1" fill="#969696"/>
<rect x="504" y="219" width="1" height="1" fill="#969696"/>
<rect x="519" y="219" width="1" height="1" fill="#969696"/>
<rect x="534" y="219" width="1" height="1" fill="#969696"/>
<rect x="549" y="219" width="1" height="1" fill="#969696"/>
<rect x="564" y="219" width="1" height="1" fill="#969696"/>
<rect x="579" y="219" width="1" height="1" fill="#969696"/>
<rect x="594" y="219" width="1" height="1" fill="#969696"/>
<rect x="609" y="219" width="1" height="1" fill="#969696"/>
<rect x="624" y="219" width="1" height="1" fill="#969696"/>
<rect x="639" y="219" width="1" height="1" fill="#969696"/>
<rect x="654" y="219" width="1" height="1" fill="#969696"/>
<rect x="669" y="219" width="1" height="1" fill="#969696"/>
<rect x="684" y="219" width="1" height="1" fill="#969696"/>
<rect x="699" y="219" width="1" height="1" fill="#969696"/>
<rect x="714" y="219" width="1" height="1" fill="#969696"/>
<rect x="729" y="219" width="1" height="1" fill="#969696"/>
<rect x="744" y="219" width="1" height="1" fill="#969696"/>
<rect x="759" y="219" width="1" height="1" fill="#969696"/>
<rect x="39" y="339" width="1" height="1" fill="#969696"/>
<rect x="54" y="339" width="1" height="1" fill="#969696"/>
<rect x="69" y="339" width="1" height="1" fill="#969696"/>
<rect x="84" y="339" width="1" height="1" fill="#969696"/>
<rect x="99" y="339" width="1" height="1" fill="#969696"/>
<rect x="114" y="339" width="1" height="1" fill="#969696"/>
<rect x="129" y="339" width="1" height="1" fill="#969696"/>
<rect x="144" y="339" width="1" height="1" fill="#969696"/>
<rect x="159" y="339" width="1" height="1" fill="#969696"/>
<rect x="174" y="339" width="1" height="1" fill="#969696"/>
<rect x="189" y="339" width="1" height="1" fill="#969696"/>
<rect x="204" y="339" width="1" height="1" fill="#969696"/>
<rect x="219" y="339" width="1" height="1" fill="#969696"/>
<rect x="234" y="339" width="1" height="1" fill="#969696"/>
<rect x="249" y="339" width="1" height="1" fill="#969696"/>
<rect x="264" y="339" width="1" height="1" fill="#969696"/>
<rect x="279" y="339" width="1" height="1" fill="#969696"/>
<rect x="294" y="339" width="1" height="1" fill="#969696"/>
<rect x="309" y="339" width="1" height="1" fill="#969696"/>
<rect x="324" y="339" width="1" height="1" fill="#969696"/>
<rect x="339" y="339" width="1" height="1" fill="#969696"/>
<rect x="354" y="339" width="1" height="1" fill="#969696"/>
<rect x="369" y="339" width="1" height="1" fill="#969696"/>
<rect x="384" y="339" width="1" height="1" fill="#969696"/>
<rect x="399" y="339" width="1" height="1" fill="#969696"/>
<rect x="414" y="339" width="1" height="1" fill="#969696"/>
<rect x="429" y="339" width="1" height="1" fill="#969696"/>
<rect x="444" y="339" width="1" height="1" fill="#969696"/>
<rect x="459" y="339" width="1" height="1" fill="#969696"/>
<rect x="474" y="339" width="1" height="1" fill="#969696"/>
<rect x="489" y="339" width="1" height="1" fill="#969696"/>
<rect x="504" y="339" width="1" height="1" fill="#969696"/>
<rect x="519" y="339" width="1" height="1" fill="#969696"/>
<rect x="534" y="339" width="1" height="1" fill="#969696"/>
<rect x="549" y="339" width="1" height="1" fill="#969696"/>
<rect x="564" y="339" width="1" height="1" fill="#969696"/>
<rect x="579" y="339" width="1" height="1" fill="#969696"/>
<rect x="594" y="339" width="1" height="1" fill="#969696"/>
<rect x="609" y="339" width="1" height="1" fill="#969696"/>
<rect x="624" y="339" width="1" height="1" fill="#969696"/>
<rect x="639" y="339" width="1" height="1" fill="#969696"/>
<rect x="654" y="339" width="1" height="1" fill="#969696"/>
<rect x="669" y="339" width="1" height="1" fill="#969696"/>
<rect x="684" y="339" width="1" height="1" fill="#969696"/>
<rect x="699" y="339" width="1" height="1" fill="#969696"/>
<rect x="714" y="339" width="1" height="1" fill="#969696"/>
<rect x="729" y="339" width="1" height="1" fill="#969696"/>
<rect x="744" y="339" width="1" height="1" fill="#969696"/>
<rect x="759" y="339" width="1" height="1" fill="#969696"/>
<rect x="39" y="399" width="1" height="1" fill="#969696"/>
<rect x="54" y="399" width="1" height="1" fill="#969696"/>
<rect x="69" y="399" width="1" height="1" fill="#969696"/>
<rect x="84" y="399" width="1" height="1" fill="#969696"/>
<rect x="99" y="399" width="1" height="1" fill="#969696"/>
<rect x="114" y="399" width="1" height="1" fill="#969696"/>
<rect x="129" y="399" width="1" height="1" fill="#969696"/>
<rect x="144" y="399" width="1" height="1" fill="#969696"/>
<rect x="159" y="399" width="1" height="1" fill="#969696"/>
<rect x="174" y="399" width="1" height="1" fill="#969696"/>
<rect x="189" y="399" width="1" height="1" fill="#969696"/>
<rect x="204" y="399" width="1" height="1" fill="#969696"/>
<rect x="219" y="399" width="1" height="1" fill="#969696"/>
<rect x="234" y="399" width="1" height="1" fill="#969696"/>
<rect x="249" y="399" width="1" height="1" fill="#969696"/>
<rect x="264" y="399" width="1" height="1" fill="#969696"/>
<rect x="279" y="399" width="1" height="1" fill="#969696"/>
<rect x="294" y="399" width="1" height="1" fill="#969696"/>
<rect x="309" y="399" width="1" height="1" fill="#969696"/>
<rect x="324" y="399" width="1" height="1" fill="#969696"/>
<rect x="339" y="399" width="1" height="1" fill="#969696"/>
<rect x="354" y="399" width="1" height="1" fill="#969696"/>
<rect x="369" y="399" width="1" height="1" fill="#969696"/>
<rect x="384" y="399" width="1" height="1" fill="#969696"/>
<rect x="399" y="399" width="1" height="1" fill="#969696"/>
<rect x="414" y="399" width="1" height="1" fill="#969696"/>
<rect x="429" y="399" width="1" height="1" fill="#969696"/>
<rect x="444" y="399" width="1" height="1" fill="#969696"/>
<rect x="459" y="399" width="1" height="1" fill="#969696"/>
<rect x="474" y="399" width="1" height="1" fill="#969696"/>
<rect x="489" y="399" width="1" height="1" fill="#969696"/>
<rect x="504" y="399" width="1" height="1" fill="#969696"/>
<rect x="519" y="399" width="1" height="1" fill="#969696"/>
<rect x="534" y="399" width="1" height="1" fill="#969696"/>
<rect x="549" y="399" width="1" height="1" fill="#969696"/>
<rect x="564" y="399" width="1" height="1" fill="#969696"/>
<rect x="579" y="399" width="1" height="1" fill="#969696"/>
<rect x="594" y="399" width="1" height="1" fill="#969696"/>
<rect x="609" y="399" width="1" height="1" fill="#969696"/>
<rect x="624" y="399" width="1" height="1" fill="#969696"/>
<rect x="639" y="399" width="1" height="1" fill="#969696"/>
<rect x="654" y="399" width="1" height="1" fill="#969696"/>
<rect x="669" y="399" width="1" height="1" fill="#969696"/>
<rect x="684" y="399" width="1" height="1" fill="#969696"/>
<rect x="699" y="399" width="1" height="1" fill="#969696"/>
<rect x="714" y="399" width="1" height="1" fill="#969696"/>
<rect x="729" y="399" width="1" height="1" fill="#969696"/>
<rect x="744" y="399" width="1" height="1" fill="#969696"/>
<rect x="759" y="399" width="1" height="1" fill="#969696"/>
<rect x="39" y="459" width="1" height="1" fill="#969696"/>
<rect x="54" y="459" width="1" height="1" fill="#969696"/>
<rect x="69" y="459" width="1" height="1" fill="#969696"/>
<rect x="84" y="459" width="1" height="1" fill="#969696"/>
<rect x="99" y="459" width="1" height="1" fill="#969696"/>
<rect x="114" y="459" width="1" height="1" fill="#969696"/>
<rect x="129" y="459" width="1" height="1" fill="#969696"/>
<rect x="144" y="459" width="1" height="1" fill="#969696"/>
<rect x="159" y="459" width="1" height="1" fill="#969696"/>
<rect x="174" y="459" width="1" height="1" fill="#969696"/>
<rect x="189" y="459" width="1" height="1" fill="#969696"/>
<rect x="204" y="459" width="1" height="1" fill="#969696"/>
<rect x="219" y="459" width="1" height="1" fill="#969696"/>
<rect x="234" y="459" width="1" height="1" fill="#969696"/>
<rect x="249" y="459" width="1" height="1" fill="#969696"/>
<rect x="264" y="459" width="1" height="1" fill="#969696"/>
<rect x="279" y="459" width="1" height="1" fill="#969696"/>
<rect x="294" y="459" width="1" height="1" fill="#969696"/>
<rect x="309" y="459" width="1" height="1" fill="#969696"/>
<rect x="324" y="459" width="1" height="1" fill="#969696"/>
<rect x="339" y="459" width="1" height="1" fill="#969696"/>
<rect x="354" y="459" width="1" height="1" fill="#969696"/>
<rect x="369" y="459" width="1" height="1" fill="#969696"/>
<rect x="384" y="459" width="1" height="1" fill="#969696"/>
<rect x="399" y="459" width="1" height="1" fill="#969696"/>
<rect x="414" y="459" width="1" height="1" fill="#969696"/>
<rect x="429" y="459" width="1" height="1" fill="#969696"/>
<rect x="444" y="459" width="1" height="1" fill="#969696"/>
<rect x="459" y="459" width="1" height="1" fill="#969696"/>
<rect x="474" y="459" width="1" height="1" fill="#969696"/>
<rect x="489" y="459" width="1" height="1" fill="#969696"/>
<rect x="504" y="459" width="1" height="1" fill="#969696"/>
<rect x="519" y="459" width="1" height="1" fill="#969696"/>
<rect x="534" y="459" width="1" height="1" fill="#969696"/>
<rect x="549" y="459" width="1" height="1" fill="#969696"/>
<rect x="564" y="459" width="1" height="1" fill="#969696"/>
<rect x="579" y="459" width="1" height="1" fill="#969696"/>
<rect x="594" y="459" width="1" height="1" fill="#969696"/>
<rect x="609" y="459" width="1" height="1" fill="#969696"/>
<rect x="624" y="459" width="1" height="1" fill="#969696"/>
<rect x="639" y="459" width="1" height="1" fill="#969696"/>
<rect x="654" y="459" width="1" height="1" fill="#969696"/>
<rect x="669" y="459" width="1" height="1" fill="#969696"/>
<rect x="684" y="459" width="1" height="1" fill="#969696"/>
<rect x="699" y="459" width="1" height="1" fill="#969696"/>
<rect x="714" y="459" width="1" height="1" fill="#969696"/>
<rect x="729" y="459" width="1" height="1" fill="#969696"/>
<rect x="744" y="459" width="1" height="1" fill="#969696"/>
<rect x="759" y="459" width="1" height="1" fill="#969696"/>
<rect x="398" y="51" width="3" height="1" fill="#969696"/>
<rect x="398" y="63" width="3" height="1" fill="#969696"/>
<rect x="398" y="75" width="3" height="1" fill="#969696"/>
<rect x="398" y="87" width="3" height="1" fill="#969696"/>
<rect x="398" y="99" width="3" height="1" fill="#969696"/>
<rect x="398" y="111" width="3" height="1" fill="#969696"/>
<rect x="398" y="123" width="3" height="1" fill="#969696"/>
<rect x="398" y="135" width="3" height="1" fill="#969696"/>
<rect x="398" y="147" width="3" height="1" fill="#969696"/>
<rect x="398" y="159" width="3" height="1" fill="#969696"/>
<rect x="398" y="171" width="3" height="1" fill="#969696"/>
<rect x="398" y="183" width="3" height="1" fill="#969696"/>
<rect x="398" y="195" width="3" height="1" fill="#969696"/>
<rect x="398" y="207" width="3" height="1" fill="#969696"/>
<rect x="398" y="219" width="3" height="1" fill="#969696"/>
<rect x="398" y="231" width="3" height="1" fill="#969696"/>
<rect x="398" y="243" width="3" height="1" fill="#969696"/>
<rect x="398" y="255" width="3" height="1" fill="#969696"/>
<rect x="398" y="267" width="3" height="1" fill="#969696"/>
<rect x="398" y="279" width="3" height="1" fill="#969696"/>
<rect x="398" y="291" width="3" height="1" fill="#969696"/>
<rect x="398" y="303" width="3" height="1" fill="#969696"/>
<rect x="398" y="315" width="3" height="1" fill="#969696"/>
<rect x="398" y="327" width="3" height="1" fill="#969696"/>
<rect x="398" y="339" width="3" height="1" fill="#969696"/>
<rect x="398" y="351" width="3" height="1" fill="#969696"/>
<rect x="398" y="363" width="3" height="1" fill="#969696"/>
<rect x="398" y="375" width="3" height="1" fill="#969696"/>
<rect x="398" y="387" width="3" height="1" fill="#969696"/>
<rect x="398" y="399" width="3" height="1" fill="#969696"/>
<rect x="398" y="411" width="3" height="1" fill="#969696"/>
<rect x="398" y="423" width="3" height="1" fill="#969696"/>
<rect x="398" y="435" width="3" height="1" fill="#969696"/>
<rect x="398" y="447" width="3" height="1" fill="#969696"/>
<rect x="398" y="459" width="3" height="1" fill="#969696"/>
<rect x="398" y="471" width="3" height="1" fill="#969696"/>
<rect x="398" y="483" width="3" height="1" fill="#969696"/>
<rect x="398" y="495" width="3" height="1" fill="#969696"/>
<rect x="398" y="507" width="3" height="1" fill="#969696"/>
<rect x="39" y="278" width="1" height="3" fill="#969696"/>
<rect x="54" y="278" width="1" height="3" fill="#969696"/>
<rect x="69" y="278" width="1" height="3" fill="#969696"/>
<rect x="84" y="278" width="1" height="3" fill="#969696"/>
<rect x="99" y="278" width="1" height="3" fill="#969696"/>
<rect x="114" y="278" width="1" height="3" fill="#969696"/>
<rect x="129" y="278" width="1" height="3" fill="#969696"/>
<rect x="144" y="278" width="1" height="3" fill="#969696"/>
<rect x="159" y="278" width="1" height="3" fill="#969696"/>
<rect x="174" y="278" width="1" height="3" fill="#969696"/>
<rect x="189" y="278" width="1" height="3" fill="#969696"/>
<rect x="204" y="278" width="1" height="3" fill="#969696"/>
<rect x="219" y="278" width="1" height="3" fill="#969696"/>
<rect x="234" y="278" width="1" height="3" fill="#969696"/>
<rect x="249" y="278" width="1" height="3" fill="#969696"/>
<rect x="264" y="278" width="1" height="3" fill="#969696"/>
<rect x="279" y="278" width="1" height="3" fill="#969696"/>
<rect x="294" y="278" width="1" height="3" fill="#969696"/>
<rect x="309" y="278" width="1" height="3" fill="#969696"/>
<rect x="324" y="278" width="1" height="3" fill="#969696"/>
<rect x="339" y="278" width="1" height="3" fill="#969696"/>
<rect x="354" y="278" width="1" height="3" fill="#969696"/>
<rect x="369" y="278" width="1" height="3" fill="#969696"/>
<rect x="384" y="278" width="1" height="3" fill="#969696"/>
<rect x="399" y="278" width="1" height="3" fill="#969696"/>
<rect x="414" y="278" width="1" height="3" fill="#969696"/>
<rect x="429" y="278" width="1" height="3" fill="#969696"/>
<rect x="444" y="278" width="1" height="3" fill="#969696"/>
<rect x="459" y="278" width="1" height="3" fill="#969696"/>
<rect x="474" y="278" width="1" height="3" fill="#969696"/>
<rect x="489" y="278" width="1" height="3" fill="#969696"/>
<rect x="504" y="278" width="1" height="3" fill="#969696"/>
<rect x="519" y="278" width="1" height="3" fill="#969696"/>
<rect x="534" y="278" width="1" height="3" fill="#969696"/>
<rect x="549" y="278" width="1" height="3" fill="#969696"/>
<rect x="564" y="278" width="1" height="3" fill="#969696"/>
<rect x="579" y="278" width="1" height="3" fill="#969696"/>
<rect x="594" y="278" width="1" height="3" fill="#969696"/>
<rect x="609" y="278" width="1" height="3" fill="#969696"/>
<rect x="624" y="278" width="1" height="3" fill="#969696"/>
<rect x="639" y="278" width="1" height="3" fill="#969696"/>
<rect x="654" y="278" width="1" height="3" fill="#969696"/>
<rect x="669" y="278" width="1" height="3" fill="#969696"/>
<rect x="684" y="278" width="1" height="3" fill="#969696"/>
<rect x="699" y="278" width="1" height="3" fill="#969696"/>
<rect x="714" y="278" width="1" height="3" fill="#969696"/>
<rect x="729" y="278" width="1" height="3" fill="#969696"/>
<rect x="744" y="278" width="1" height="3" fill="#969696"/>
<rect x="759" y="278" width="1" height="3" fill="#969696"/>
<rect x="397" y="279" width="5" height="1" fill="#969696"/>
<rect x="399" y="277" width="1" height="5" fill="#969696"/>
<rect x="39" y="40" width="1" height="2" fill="#9c9c9c"/>
<rect x="39" y="517" width="1" height="2" fill="#9c9c9c"/>
<rect x="54" y="40" width="1" height="2" fill="#9c9c9c"/>
<rect x="54" y="517" width="1" height="2" fill="#9c9c9c"/>
<rect x="69" y="40" width="1" height="2" fill="#9c9c9c"/>
<rect x="69" y="517" width="1" height="2" fill="#9c9c9c"/>
<rect x="84" y="40" width="1" height="2" fill="#9c9c9c"/>
<rect x="84" y="517" width="1" height="2" fill="#9c9c9c"/>
<rect x="99" y="40" width="1" height="4" fill="#9c9c9c"/>
<rect x="99" y="515" width="1" height="4" fill="#9c9c9c"/>
<rect x="114" y="40" width="1" height="2" fill="#9c9c9c"/>
<rect x="114" y="517" width="1" height="2" fill="#9c9c9c"/>
<rect x="129" y="40" width="1" height="2" fill="#9c9c9c"/>
<rect x="129" y="517" width="1" height="2" fill="#9c9c9c"/>
<rect x="144" y="40" width="1" height="2" fill="#9c9c9c"/>
<rect x="144" y="517" width="1" height="2" fill="#9c9c9c"/>
<rect x="159" y="40" width="1" height="2" fill="#9c9c9c"/>
<rect x="159" y="517" width="1" height="2" fill="#9c9c9c"/>
<rect x="174" y="40" width="1" height="4" fill="#9c9c9c"/>
<rect x="174" y="515" width="1" height="4" fill="#9c9c9c"/>
<rect x="189" y="40" width="1" height="2" fill="#9c9c9c"/>
<rect x="189" y="517" width="1" height="2" fill="#9c9c9c"/>
<rect x="204" y="40" width="1" height="2" fill="#9c9c9c"/>
<rect x="204" y="517" width="1" height="2" fill="#9c9c9c"/>
<rect x="219" y="40" width="1" height="2" fill="#9c9c9c"/>
<rect x="219" y="517" width="1" height="2" fill="#9c9c9c"/>
<rect x="234" y="40" width="1" height="2" fill="#9c9c9c"/>
<rect x="234" y="517" width="1" height="2" fill="#9c9c9c"/>
<rect x="249" y="40" width="1" height="4" fill="#9c9c9c"/>
<rect x="249" y="515" width="1" height="4" fill="#9c9c9c"/>
<rect x="264" y="40" width="1" height="2" fill="#9c9c9c"/>
<rect x="264" y="517" width="1" height="2" fill="#9c9c9c"/>
<rect x="279" y="40" width="1" height="2" fill="#9c9c9c"/>
<rect x="279" y="517" width="1" height="2" fill="#9c9c9c"/>
<rect x="294" y="40" width="1" height="2" fill="#9c9c9c"/>
<rect x="294" y="517" width="1" height="2" fill="#9c9c9c"/>
<rect x="309" y="40" width="1" height="2" fill="#9c9c9c"/>
<rect x="309" y="517" width="1" height="2" fill="#9c9c9c"/>
<rect x="324" y="40" width="1" height="4" fill="#9c9c9c"/>
<rect x="324" y="515" width="1" height="4" fill="#9c9c9c"/>
<rect x="339" y="40" width="1" height="2" fill="#9c9c9c"/>
<rect x="339" y="517" width="1" height="2" fill="#9c9c9c"/>
<rect x="354" y="40" width="1" height="2" fill="#9c9c9c"/>
<rect x="354" y="517" width="1" height="2" fill="#9c9c9c"/>
<rect x="369" y="40" width="1" height="2" fill="#9c9c9c"/>
<rect x="369" y="517" width="1" height="2" fill="#9c9c9c"/>
<rect x="384" y="40" width="1" height="2" fill="#9c9c9c"/>
<rect x="384" y="517" width="1" height="2" fill="#9c9c9c"/>
<rect x="399" y="40" width="1" height="4" fill="#9c9c9c"/>
<rect x="399" y="515" width="1" height="4" fill="#9c9c9c"/>
<rect x="414" y="40" width="1" height="2" fill="#9c9c9c"/>
<rect x="414" y="517" width="1" height="2" fill="#9c9c9c"/>
<rect x="429" y="40" width="1" height="2" fill="#9c9c9c"/>
<rect x="429" y="517" width="1" height="2" fill="#9c9c9c"/>
<rect x="444" y="40" width="1" height="2" fill="#9c9c9c"/>
<rect x="444" y="517" width="1" height="2" fill="#9c9c9c"/>
<rect x="459" y="40" width="1" height="2" fill="#9c9c9c"/>
<rect x="459" y="517" width="1" height="2" fill="#9c9c9c"/>
<rect x="474" y="40" width="1" height="4" fill="#9c9c9c"/>
<rect x="474" y="515" width="1" height="4" fill="#9c9c9c"/>
<rect x="489" y="40" width="1" height="2" fill="#9c9c9c"/>
<rect x="489" y="517" width="1" height="2" fill="#9c9c9c"/>
<rect x="504" y="40" width="1" height="2" fill="#9c9c9c"/>
<rect x="504" y="517" width="1" height="2" fill="#9c9c9c"/>
<rect x="519" y="40" width="1" height="2" fill="#9c9c9c"/>
<rect x="519" y="517" width="1" height="2" fill="#9c9c9c"/>
<rect x="534" y="40" width="1" height="2" fill="#9c9c9c"/>
<rect x="534" y="517" width="1" height="2" fill="#9c9c9c"/>
<rect x="549" y="40" width="1" height="4" fill="#9c9c9c"/>
<rect x="549" y="515" width="1" height="4" fill="#9c9c9c"/>
<rect x="564" y="40" width="1" height="2" fill="#9c9c9c"/>
<rect x="564" y="517" width="1" height="2" fill="#9c9c9c"/>
<rect x="579" y="40" width="1" height="2" fill="#9c9c9c"/>
<rect x="579" y="517" width="1" height="2" fill="#9c9c9c"/>
<rect x="594" y="40" width="1" height="2" fill="#9c9c9c"/>
<rect x="594" y="517" width="1" height="2" fill="#9c9c9c"/>
<rect x="609" y="40" width="1" height="2" fill="#9c9c9c"/>
<rect x="609" y="517" width="1" height="2" fill="#9c9c9c"/>
<rect x="624" y="40" width="1" height="4" fill="#9c9c9c"/>
<rect x="624" y="515" width="1" height="4" fill="#9c9c9c"/>
<rect x="639" y="40" width="1" height="2" fill="#9c9c9c"/>
<rect x="639" y="517" width="1" height="2" fill="#9c9c9c"/>
<rect x="654" y="40" width="1" height="2" fill="#9c9c9c"/>
<rect x="654" y="517" width="1" height="2" fill="#9c9c9c"/>
<rect x="669" y="40" width="1" height="2" fill="#9c9c9c"/>
<rect x="669" y="517" width="1" height="2" fill="#9c9c9c"/>
<rect x="684" y="40" width="1" height="2" fill="#9c9c9c"/>
<rect x="684" y="517" width="1" height="2" fill="#9c9c9c"/>
<rect x="699" y="40" width="1" height="4" fill="#9c9c9c"/>
<rect x="699" y="515" width="1" height="4" fill="#9c9c9c"/>
<rect x="714" y="40" width="1" height="2" fill="#9c9c9c"/>
<rect x="714" y="517" width="1" height="2" fill="#9c9c9c"/>
<rect x="729" y="40" width="1" height="2" fill="#9c9c9c"/>
<rect x="729" y="517" width="1" height="2" fill="#9c9c9c"/>
<rect x="744" y="40" width="1" height="2" fill="#9c9c9c"/>
<rect x="744" y="517" width="1" height="2" fill="#9c9c9c"/>
<rect x="759" y="40" width="1" height="2" fill="#9c9c9c"/>
<rect x="759" y="517" width="1" height="2" fill="#9c9c9c"/>
<rect x="25" y="51" width="2" height="1" fill="#9c9c9c"/>
<rect x="772" y="51" width="2" height="1" fill="#9c9c9c"/>
<rect x="25" y="63" width="2" height="1" fill="#9c9c9c"/>
<rect x="772" y="63" width="2" height="1" fill="#9c9c9c"/>
<rect x="25" y="75" width="2" height="1" fill="#9c9c9c"/>
<rect x="772" y="75" width="2" height="1" fill="#9c9c9c"/>
<rect x="25" y="87" width="2" height="1" fill="#9c9c9c"/>
<rect x="772" y="87" width="2" height="1" fill="#9c9c9c"/>
<rect x="25" y="99" width="4" height="1" fill="#9c9c9c"/>
<rect x="770" y="99" width="4" height="1" fill="#9c9c9c"/>
<rect x="25" y="111" width="2" height="1" fill="#9c9c9c"/>
<rect x="772" y="111" width="2" height="1" fill="#9c9c9c"/>
<rect x="25" y="123" width="2" height="1" fill="#9c9c9c"/>
<rect x="772" y="123" width="2" height="1" fill="#9c9c9c"/>
<rect x="25" y="135" width="2" height="1" fill="#9c9c9c"/>
<rect x="772" y="135" width="2" height="1" fill="#9c9c9c"/>
<rect x="25" y="147" width="2" height="1" fill="#9c9c9c"/>
<rect x="772" y="147" width="2" height="1" fill="#9c9c9c"/>
<rect x="25" y="159" width="4" height="1" fill="#9c9c9c"/>
<rect x="770" y="159" width="4" height="1" fill="#9c9c9c"/>
<rect x="25" y="171" width="2" height="1" fill="#9c9c9c"/>
<rect x="772" y="171" width="2" height="1" fill="#9c9c9c"/>
<rect x="25" y="183" width="2" height="1" fill="#9c9c9c"/>
<rect x="772" y="183" width="2" height="1" fill="#9c9c9c"/>
<rect x="25" y="195" width="2" height="1" fill="#9c9c9c"/>
<rect x="772" y="195" width="2" height="1" fill="#9c9c9c"/>
<rect x="25" y="207" width="2" height="1" fill="#9c9c9c"/>
<rect x="772" y="207" width="2" height="1" fill="#9c9c9c"/>
<rect x="25" y="219" width="4" height="1" fill="#9c9c9c"/>
<rect x="770" y="219" width="4" height="1" fill="#9c9c9c"/>
<rect x="25" y="231" width="2" height="1" fill="#9c9c9c"/>
<rect x="772" y="231" width="2" height="1" fill="#9c9c9c"/>
<rect x="25" y="243" width="2" height="1" fill="#9c9c9c"/>
<rect x="772" y="243" width="2" height="1" fill="#9c9c9c"/>
<rect x="25" y="255" width="2" height="1" fill="#9c9c9c"/>
<rect x="772" y="255" width="2" height="1" fill="#9c9c9c"/>
<rect x="25" y="267" width="2" height="1" fill="#9c9c9c"/>
<rect x="772" y="267" width="2" height="1" fill="#9c9c9c"/>
<rect x="25" y="279" width="4" height="1" fill="#9c9c9c"/>
<rect x="770" y="279" width="4" height="1" fill="#9c9c9c"/>
<rect x="25" y="291" width="2" height="1" fill="#9c9c9c"/>
<rect x="772" y="291" width="2" height="1" fill="#9c9c9c"/>
<rect x="25" y="303" width="2" height="1" fill="#9c9c9c"/>
<rect x="772" y="303" width="2" height="1" fill="#9c9c9c"/>
<rect x="25" y="315" width="2" height="1" fill="#9c9c9c"/>
<rect x="772" y="315" width="2" height="1" fill="#9c9c9c"/>
<rect x="25" y="327" width="2" height="1" fill="#9c9c9c"/>
<rect x="772" y="327" width="2" height="1" fill="#9c9c9c"/>
<rect x="25" y="339" width="4" height="1" fill="#9c9c9c"/>
<rect x="770" y="339" width="4" height="1" fill="#9c9c9c"/>
<rect x="25" y="351" width="2" height="1" fill="#9c9c9c"/>
<rect x="772" y="351" width="2" height="1" fill="#9c9c9c"/>
<rect x="25" y="363" width="2" height="1" fill="#9c9c9c"/>
<rect x="772" y="363" width="2" height="1" fill="#9c9c9c"/>
<rect x="25" y="375" width="2" height="1" fill="#9c9c9c"/>
<rect x="772" y="375" width="2" height="1" fill="#9c9c9c"/>
<rect x="25" y="387" width="2" height="1" fill="#9c9c9c"/>
<rect x="772" y="387" width="2" height="1" fill="#9c9c9c"/>
<rect x="25" y="399" width="4" height="1" fill="#9c9c9c"/>
<rect x="770" y="399" width="4" height="1" fill="#9c9c9c"/>
<rect x="25" y="411" width="2" height="1" fill="#9c9c9c"/>
<rect x="772" y="411" width="2" height="1" fill="#9c9c9c"/>
<rect x="25" y="423" width="2" height="1" fill="#9c9c9c"/>
<rect x="772" y="423" width="2" height="1" fill="#9c9c9c"/>
<rect x="25" y="435" width="2" height="1" fill="#9c9c9c"/>
<rect x="772" y="435" width="2" height="1" fill="#9c9c9c"/>
<rect x="25" y="447" width="2" height="1" fill="#9c9c9c"/>
<rect x="772" y="447" width="2" height="1" fill="#9c9c9c"/>
<rect x="25" y="459" width="4" height="1" fill="#9c9c9c"/>
<rect x="770" y="459" width="4" height="1" fill="#9c9c9c"/>
<rect x="25" y="471" width="2" height="1" fill="#9c9c9c"/>
<rect x="772" y="471" width="2" height="1" fill="#9c9c9c"/>
<rect x="25" y="483" width="2" height="1" fill="#9c9c9c"/>
<rect x="772" y="483" width="2" height="1" fill="#9c9c9c"/>
<rect x="25" y="495" width="2" height="1" fill="#9c9c9c"/>
<rect x="772" y="495" width="2" height="1" fill="#9c9c9c"/>
<rect x="25" y="507" width="2" height="1" fill="#9c9c9c"/>
<rect x="772" y="507" width="2" height="1" fill="#9c9c9c"/>
<polygon points="25,40 32,40 32,47" fill="#ff3300" shape-rendering="geometricPrecision"/>
<rect x="392" y="40" width="1" height="1" fill="#ff3300"/>
<rect x="406" y="40" width="1" height="1" fill="#ff3300"/>
<rect x="393" y="41" width="1" height="1" fill="#ff3300"/>
<rect x="405" y="41" width="1" height="1" fill="#ff3300"/>
<rect x="394" y="42" width="1" height="1" fill="#ff3300"/>
<rect x="404" y="42" width="1" height="1" fill="#ff3300"/>
<rect x="395" y="43" width="1" height="1" fill="#ff3300"/>
<rect x="403" y="43" width="1" height="1" fill="#ff3300"/>
<rect x="396" y="44" width="1" height="1" fill="#ff3300"/>
<rect x="402" y="44" width="1" height="1" fill="#ff3300"/>
<rect x="397" y="45" width="1" height="1" fill="#ff3300"/>
<rect x="401" y="45" width="1" height="1" fill="#ff3300"/>
<rect x="398" y="46" width="1" height="1" fill="#ff3300"/>
<rect x="400" y="46" width="1" height="1" fill="#ff3300"/>
<rect x="399" y="47" width="1" height="1" fill="#ff3300"/>
<rect x="399" y="47" width="1" height="1" fill="#ff3300"/>
<polygon points="766.5,437.5 774,430.5 774,444.5" fill="#ffcc00" shape-rendering="geometricPrecision"/>
<polygon points="3.5,245.5 18.5,245.5 22.5,251.5 18.5,257.5 3.5,257.5" fill="#00f000" stroke="#000" stroke-width="1"/>
<g fill="#000"><rect x="12" y="247" width="2" height="1"/><rect x="11" y="248" width="3" height="1"/><rect x="10" y="249" width="1" height="1"/><rect x="12" y="249" width="2" height="1"/><rect x="9" y="250" width="2" height="1"/><rect x="12" y="250" width="2" height="1"/><rect x="9" y="251" width="2" height="1"/><rect x="12" y="251" width="2" height="1"/><rect x="9" y="252" width="6" height="1"/><rect x="12" y="253" width="2" height="1"/><rect x="12" y="254" width="2" height="1"/><rect x="11" y="255" width="3" height="1"/></g>
<polygon points="3.5,359.5 18.5,359.5 22.5,365.5 18.5,371.5 3.5,371.5" fill="#004284" stroke="#00f0ff" stroke-width="1"/>
<g fill="#00f0ff"><rect x="10" y="361" width="5" height="1"/><rect x="9" y="362" width="2" height="1"/><rect x="14" y="362" width="2" height="1"/><rect x="14" y="363" width="2" height="1"/><rect x="13" y="364" width="2" height="1"/><rect x="12" y="365" width="2" height="1"/><rect x="11" y="366" width="2" height="1"/><rect x="10" y="367" width="2" height="1"/><rect x="9" y="368" width="2" height="1"/><rect x="9" y="369" width="7" height="1"/></g>
<polygon points="3.5,347.5 18.5,347.5 22.5,353.5 18.5,359.5 3.5,359.5" fill="#004284" stroke="#ff20ff" stroke-width="1"/>
<g fill="#ff20ff"><rect x="10" y="349" width="5" height="1"/><rect x="9" y="350" width="2" height="1"/><rect x="14" y="350" width="2" height="1"/><rect x="14" y="351" width="2" height="1"/><rect x="14" y="352" width="2" height="1"/><rect x="11" y="353" width="4" height="1"/><rect x="14" y="354" width="2" height="1"/><rect x="14" y="355" width="2" height="1"/><rect x="9" y="356" width="2" height="1"/><rect x="14" y="356" width="2" height="1"/><rect x="10" y="357" width="5" height="1"/></g>
<polygon points="3.5,465.5 18.5,465.5 22.5,471.5 18.5,477.5 3.5,477.5" fill="#004284" stroke="#ffcc00" stroke-width="1"/>
<rect x="12" y="467" width="2" height="9" fill="#ffcc00"/>
<rect x="10" y="469" width="2" height="1" fill="#ffcc00"/>
<rect x="11" y="468" width="1" height="1" fill="#ffcc00"/>
<rect x="5" y="522" width="411" height="18" fill="#000"/>
<rect x="3" y="523" width="415" height="16" fill="#000"/>
<rect x="2" y="525" width="417" height="12" fill="#000"/>
<rect x="5" y="521" width="411" height="1" fill="#fff"/>
<rect x="5" y="540" width="411" height="1" fill="#fff"/>
<rect x="1" y="525" width="1" height="12" fill="#fff"/>
<rect x="419" y="525" width="1" height="12" fill="#fff"/>
<rect x="3" y="522" width="2" height="1" fill="#fff"/>
<rect x="416" y="522" width="2" height="1" fill="#fff"/>
<rect x="2" y="523" width="1" height="1" fill="#fff"/>
<rect x="418" y="523" width="1" height="1" fill="#fff"/>
<rect x="1" y="524" width="2" height="1" fill="#fff"/>
<rect x="418" y="524" width="2" height="1" fill="#fff"/>
<rect x="3" y="539" width="2" height="1" fill="#fff"/>
<rect x="416" y="539" width="2" height="1" fill="#fff"/>
<rect x="2" y="538" width="1" height="1" fill="#fff"/>
<rect x="418" y="538" width="1" height="1" fill="#fff"/>
<rect x="1" y="537" width="2" height="1" fill="#fff"/>
<rect x="418" y="537" width="2" height="1" fill="#fff"/>
<ellipse cx="10" cy="531.5" rx="7" ry="7.5" fill="#ffcc00" shape-rendering="geometricPrecision"/>
<rect x="9" y="526" width="2" height="12" fill="#000"/>
<rect x="7" y="528" width="2" height="1" fill="#000"/>
<rect x="8" y="527" width="1" height="1" fill="#000"/>
<rect x="30" y="528" width="14" height="2" fill="#ffcc00"/>
<rect x="30" y="531" width="4" height="2" fill="#ffcc00"/>
<rect x="35" y="531" width="4" height="2" fill="#ffcc00"/>
<rect x="40" y="531" width="4" height="2" fill="#ffcc00"/>
<g fill="#ffcc00"><rect x="67" y="525" width="5" height="1"/><rect x="66" y="526" width="2" height="2"/><rect x="66" y="532" width="2" height="2"/><rect x="71" y="526" width="2" height="2"/><rect x="71" y="533" width="2" height="1"/><rect x="70" y="528" width="3" height="1"/><rect x="69" y="529" width="2" height="1"/><rect x="68" y="530" width="2" height="1"/><rect x="67" y="531" width="2" height="1"/><rect x="66" y="534" width="7" height="1"/><rect x="74" y="525" width="2" height="7"/><rect x="79" y="525" width="2" height="7"/><rect x="75" y="532" width="2" height="1"/><rect x="78" y="532" width="2" height="1"/><rect x="76" y="533" width="3" height="1"/><rect x="77" y="534" width="1" height="1"/></g>
<ellipse cx="117" cy="531.5" rx="7" ry="7.5" fill="#00f0ff" shape-rendering="geometricPrecision"/>
<text x="117" y="537" font-family="Liberation Sans" font-weight="normal" font-size="14.5" fill="#000" text-anchor="middle">2</text>
<rect x="137" y="528" width="14" height="2" fill="#00f0ff"/>
<rect x="137" y="531" width="4" height="2" fill="#00f0ff"/>
<rect x="142" y="531" width="4" height="2" fill="#00f0ff"/>
<rect x="147" y="531" width="4" height="2" fill="#00f0ff"/>
<g fill="#00f0ff"><rect x="174" y="525" width="5" height="1"/><rect x="173" y="526" width="2" height="2"/><rect x="173" y="532" width="2" height="2"/><rect x="178" y="526" width="2" height="2"/><rect x="178" y="533" width="2" height="1"/><rect x="177" y="528" width="3" height="1"/><rect x="176" y="529" width="2" height="1"/><rect x="175" y="530" width="2" height="1"/><rect x="174" y="531" width="2" height="1"/><rect x="173" y="534" width="7" height="1"/><rect x="181" y="525" width="2" height="7"/><rect x="186" y="525" width="2" height="7"/><rect x="182" y="532" width="2" height="1"/><rect x="185" y="532" width="2" height="1"/><rect x="183" y="533" width="3" height="1"/><rect x="184" y="534" width="1" height="1"/></g>
<ellipse cx="224" cy="531.5" rx="7" ry="7.5" fill="#ff20ff" shape-rendering="geometricPrecision"/>
<text x="224" y="537" font-family="Liberation Sans" font-weight="normal" font-size="14.5" fill="#000" text-anchor="middle">3</text>
<rect x="244" y="528" width="14" height="2" fill="#ff20ff"/>
<rect x="244" y="531" width="4" height="2" fill="#ff20ff"/>
<rect x="249" y="531" width="4" height="2" fill="#ff20ff"/>
<rect x="254" y="531" width="4" height="2" fill="#ff20ff"/>
<g fill="#ff20ff"><rect x="281" y="525" width="5" height="1"/><rect x="280" y="526" width="2" height="2"/><rect x="280" y="532" width="2" height="2"/><rect x="285" y="526" width="2" height="2"/><rect x="285" y="533" width="2" height="1"/><rect x="284" y="528" width="3" height="1"/><rect x="283" y="529" width="2" height="1"/><rect x="282" y="530" width="2" height="1"/><rect x="281" y="531" width="2" height="1"/><rect x="280" y="534" width="7" height="1"/><rect x="288" y="525" width="2" height="7"/><rect x="293" y="525" width="2" height="7"/><rect x="289" y="532" width="2" height="1"/><rect x="292" y="532" width="2" height="1"/><rect x="290" y="533" width="3" height="1"/><rect x="291" y="534" width="1" height="1"/></g>
<ellipse cx="331" cy="531.5" rx="7" ry="7.5" fill="#00f000" shape-rendering="geometricPrecision"/>
<text x="331" y="537" font-family="Liberation Sans" font-weight="normal" font-size="14.5" fill="#000" text-anchor="middle">4</text>
<rect x="351" y="528" width="14" height="2" fill="#00f000"/>
<rect x="351" y="531" width="4" height="2" fill="#00f000"/>
<rect x="356" y="531" width="4" height="2" fill="#00f000"/>
<rect x="361" y="531" width="4" height="2" fill="#00f000"/>
<g fill="#00f000"><rect x="388" y="525" width="5" height="1"/><rect x="387" y="526" width="2" height="2"/><rect x="387" y="532" width="2" height="2"/><rect x="392" y="526" width="2" height="2"/><rect x="392" y="533" width="2" height="1"/><rect x="391" y="528" width="3" height="1"/><rect x="390" y="529" width="2" height="1"/><rect x="389" y="530" width="2" height="1"/><rect x="388" y="531" width="2" height="1"/><rect x="387" y="534" width="7" height="1"/><rect x="395" y="525" width="2" height="7"/><rect x="400" y="525" width="2" height="7"/><rect x="396" y="532" width="2" height="1"/><rect x="399" y="532" width="2" height="1"/><rect x="397" y="533" width="3" height="1"/><rect x="398" y="534" width="1" height="1"/></g>
<rect x="429" y="522" width="160" height="18" fill="#000"/>
<rect x="427" y="523" width="164" height="16" fill="#000"/>
<rect x="426" y="525" width="166" height="12" fill="#000"/>
<rect x="429" y="521" width="160" height="1" fill="#fff"/>
<rect x="429" y="540" width="160" height="1" fill="#fff"/>
<rect x="425" y="525" width="1" height="12" fill="#fff"/>
<rect x="592" y="525" width="1" height="12" fill="#fff"/>
<rect x="427" y="522" width="2" height="1" fill="#fff"/>
<rect x="589" y="522" width="2" height="1" fill="#fff"/>
<rect x="426" y="523" width="1" height="1" fill="#fff"/>
<rect x="591" y="523" width="1" height="1" fill="#fff"/>
<rect x="425" y="524" width="2" height="1" fill="#fff"/>
<rect x="591" y="524" width="2" height="1" fill="#fff"/>
<rect x="427" y="539" width="2" height="1" fill="#fff"/>
<rect x="589" y="539" width="2" height="1" fill="#fff"/>
<rect x="426" y="538" width="1" height="1" fill="#fff"/>
<rect x="591" y="538" width="1" height="1" fill="#fff"/>
<rect x="425" y="537" width="2" height="1" fill="#fff"/>
<rect x="591" y="537" width="2" height="1" fill="#fff"/>
<g fill="#fff"><rect x="454" y="525" width="7" height="1"/><rect x="454" y="526" width="2" height="3"/><rect x="454" y="533" width="2" height="1"/><rect x="454" y="529" width="6" height="1"/><rect x="459" y="530" width="2" height="4"/><rect x="455" y="534" width="5" height="1"/><rect x="463" y="525" width="5" height="1"/><rect x="463" y="534" width="5" height="1"/><rect x="462" y="526" width="2" height="4"/><rect x="462" y="532" width="2" height="2"/><rect x="467" y="526" width="2" height="1"/><rect x="467" y="530" width="2" height="4"/><rect x="466" y="527" width="3" height="2"/><rect x="465" y="529" width="4" height="1"/><rect x="462" y="530" width="4" height="1"/><rect x="462" y="531" width="3" height="1"/><rect x="470" y="528" width="2" height="6"/><rect x="474" y="528" width="2" height="6"/><rect x="471" y="534" width="6" height="1"/><rect x="479" y="528" width="5" height="1"/><rect x="479" y="531" width="5" height="1"/><rect x="479" y="534" width="5" height="1"/><rect x="478" y="529" width="2" height="2"/><rect x="478" y="533" width="2" height="1"/><rect x="483" y="529" width="2" height="1"/><rect x="483" y="532" width="2" height="2"/></g>
<rect x="501" y="524" width="10" height="14" fill="#fff"/>
<rect x="500" y="525" width="12" height="12" fill="#fff"/>
<rect x="499" y="526" width="14" height="10" fill="#fff"/>
<rect x="501" y="526" width="2" height="11" fill="#000"/>
<rect x="509" y="526" width="2" height="11" fill="#000"/>
<rect x="503" y="530" width="6" height="2" fill="#000"/>
<g fill="#fff"><rect x="529" y="525" width="5" height="1"/><rect x="529" y="529" width="5" height="1"/><rect x="529" y="534" width="5" height="1"/><rect x="528" y="526" width="2" height="3"/><rect x="528" y="530" width="2" height="4"/><rect x="533" y="526" width="2" height="3"/><rect x="533" y="530" width="2" height="4"/><rect x="536" y="525" width="7" height="1"/><rect x="536" y="526" width="2" height="1"/><rect x="541" y="526" width="2" height="2"/><rect x="540" y="528" width="2" height="1"/><rect x="539" y="529" width="2" height="1"/><rect x="538" y="530" width="2" height="5"/><rect x="547" y="533" width="2" height="2"/><rect x="552" y="525" width="7" height="1"/><rect x="552" y="526" width="2" height="3"/><rect x="552" y="533" width="2" height="1"/><rect x="552" y="529" width="6" height="1"/><rect x="557" y="530" width="2" height="4"/><rect x="553" y="534" width="5" height="1"/><rect x="561" y="525" width="5" height="1"/><rect x="561" y="534" width="5" height="1"/><rect x="560" y="526" width="2" height="4"/><rect x="560" y="533" width="2" height="1"/><rect x="565" y="526" width="2" height="4"/><rect x="565" y="531" width="2" height="3"/><rect x="561" y="530" width="6" height="1"/><rect x="568" y="528" width="6" height="1"/><rect x="568" y="529" width="2" height="6"/><rect x="571" y="529" width="1" height="2"/><rect x="573" y="529" width="2" height="6"/><rect x="577" y="528" width="5" height="1"/><rect x="577" y="531" width="5" height="1"/><rect x="577" y="534" width="5" height="1"/><rect x="576" y="529" width="2" height="2"/><rect x="576" y="533" width="2" height="1"/><rect x="581" y="529" width="2" height="1"/><rect x="581" y="532" width="2" height="2"/></g>
<rect x="603" y="522" width="168" height="37" fill="#000"/>
<rect x="601" y="523" width="172" height="35" fill="#000"/>
<rect x="600" y="525" width="174" height="31" fill="#000"/>
<rect x="603" y="521" width="168" height="1" fill="#fff"/>
<rect x="603" y="559" width="168" height="1" fill="#fff"/>
<rect x="599" y="525" width="1" height="31" fill="#fff"/>
<rect x="774" y="525" width="1" height="31" fill="#fff"/>
<rect x="601" y="522" width="2" height="1" fill="#fff"/>
<rect x="771" y="522" width="2" height="1" fill="#fff"/>
<rect x="600" y="523" width="1" height="1" fill="#fff"/>
<rect x="773" y="523" width="1" height="1" fill="#fff"/>
<rect x="599" y="524" width="2" height="1" fill="#fff"/>
<rect x="773" y="524" width="2" height="1" fill="#fff"/>
<rect x="601" y="558" width="2" height="1" fill="#fff"/>
<rect x="771" y="558" width="2" height="1" fill="#fff"/>
<rect x="600" y="557" width="1" height="1" fill="#fff"/>
<rect x="773" y="557" width="1" height="1" fill="#fff"/>
<rect x="599" y="556" width="2" height="1" fill="#fff"/>
<rect x="773" y="556" width="2" height="1" fill="#fff"/>
<ellipse cx="629" cy="531.5" rx="7" ry="7.5" fill="#ffcc00" shape-rendering="geometricPrecision"/>
<rect x="628" y="526" width="2" height="12" fill="#000"/>
<rect x="626" y="528" width="2" height="1" fill="#000"/>
<rect x="627" y="527" width="1" height="1" fill="#000"/>
<rect x="654" y="525" width="5" height="1" fill="#ffcc00"/>
<rect x="658" y="525" width="1" height="13" fill="#ffcc00"/>
<rect x="658" y="537" width="5" height="1" fill="#ffcc00"/>
<rect x="655" y="531" width="1" height="1" fill="#ffcc00"/>
<rect x="661" y="531" width="1" height="1" fill="#ffcc00"/>
<rect x="656" y="532" width="1" height="1" fill="#ffcc00"/>
<rect x="660" y="532" width="1" height="1" fill="#ffcc00"/>
<rect x="657" y="533" width="1" height="1" fill="#ffcc00"/>
<rect x="659" y="533" width="1" height="1" fill="#ffcc00"/>
<rect x="658" y="534" width="1" height="1" fill="#ffcc00"/>
<rect x="658" y="534" width="1" height="1" fill="#ffcc00"/>
<g fill="#ffcc00"><rect x="684" y="525" width="2" height="1"/><rect x="684" y="527" width="2" height="7"/><rect x="682" y="526" width="4" height="1"/><rect x="682" y="534" width="6" height="1"/><rect x="692" y="533" width="2" height="2"/><rect x="700" y="525" width="2" height="1"/><rect x="700" y="527" width="2" height="7"/><rect x="698" y="526" width="4" height="1"/><rect x="698" y="534" width="6" height="1"/><rect x="706" y="525" width="5" height="1"/><rect x="706" y="529" width="5" height="1"/><rect x="706" y="534" width="5" height="1"/><rect x="705" y="526" width="2" height="3"/><rect x="705" y="530" width="2" height="4"/><rect x="710" y="526" width="2" height="3"/><rect x="710" y="530" width="2" height="4"/><rect x="713" y="525" width="2" height="7"/><rect x="718" y="525" width="2" height="7"/><rect x="714" y="532" width="2" height="1"/><rect x="717" y="532" width="2" height="1"/><rect x="715" y="533" width="3" height="1"/><rect x="716" y="534" width="1" height="1"/></g>
<g fill="#ffcc00"><rect x="756" y="525" width="5" height="1"/><rect x="756" y="534" width="5" height="1"/><rect x="757" y="526" width="2" height="8"/><rect x="760" y="526" width="2" height="1"/><rect x="760" y="533" width="2" height="1"/><rect x="761" y="527" width="2" height="6"/><rect x="766" y="525" width="4" height="1"/><rect x="766" y="534" width="4" height="1"/><rect x="765" y="526" width="2" height="1"/><rect x="765" y="533" width="2" height="1"/><rect x="769" y="526" width="2" height="1"/><rect x="769" y="533" width="2" height="1"/><rect x="764" y="527" width="2" height="6"/><rect x="770" y="527" width="1" height="1"/><rect x="770" y="532" width="1" height="1"/></g>
<rect x="647" y="499" width="124" height="18" fill="#000"/>
<rect x="645" y="500" width="128" height="16" fill="#000"/>
<rect x="644" y="502" width="130" height="12" fill="#000"/>
<rect x="647" y="498" width="124" height="1" fill="#fff"/>
<rect x="647" y="517" width="124" height="1" fill="#fff"/>
<rect x="643" y="502" width="1" height="12" fill="#fff"/>
<rect x="774" y="502" width="1" height="12" fill="#fff"/>
<rect x="645" y="499" width="2" height="1" fill="#fff"/>
<rect x="771" y="499" width="2" height="1" fill="#fff"/>
<rect x="644" y="500" width="1" height="1" fill="#fff"/>
<rect x="773" y="500" width="1" height="1" fill="#fff"/>
<rect x="643" y="501" width="2" height="1" fill="#fff"/>
<rect x="773" y="501" width="2" height="1" fill="#fff"/>
<rect x="645" y="516" width="2" height="1" fill="#fff"/>
<rect x="771" y="516" width="2" height="1" fill="#fff"/>
<rect x="644" y="515" width="1" height="1" fill="#fff"/>
<rect x="773" y="515" width="1" height="1" fill="#fff"/>
<rect x="643" y="514" width="2" height="1" fill="#fff"/>
<rect x="773" y="514" width="2" height="1" fill="#fff"/>
<rect x="649" y="501" width="15" height="13" fill="#fff"/>
<rect x="647" y="502" width="19" height="11" fill="#fff"/>
<rect x="646" y="504" width="21" height="7" fill="#fff"/>
<rect x="649" y="500" width="15" height="1" fill="#fff"/>
<rect x="649" y="514" width="15" height="1" fill="#fff"/>
<rect x="645" y="504" width="1" height="7" fill="#fff"/>
<rect x="667" y="504" width="1" height="7" fill="#fff"/>
<rect x="647" y="501" width="2" height="1" fill="#fff"/>
<rect x="664" y="501" width="2" height="1" fill="#fff"/>
<rect x="646" y="502" width="1" height="1" fill="#fff"/>
<rect x="666" y="502" width="1" height="1" fill="#fff"/>
<rect x="645" y="503" width="2" height="1" fill="#fff"/>
<rect x="666" y="503" width="2" height="1" fill="#fff"/>
<rect x="647" y="513" width="2" height="1" fill="#fff"/>
<rect x="664" y="513" width="2" height="1" fill="#fff"/>
<rect x="646" y="512" width="1" height="1" fill="#fff"/>
<rect x="666" y="512" width="1" height="1" fill="#fff"/>
<rect x="645" y="511" width="2" height="1" fill="#fff"/>
<rect x="666" y="511" width="2" height="1" fill="#fff"/>
<text x="652" y="514" font-family="Liberation Sans" font-weight="bold" font-size="16" fill="#000" >F</text>
<g fill="#fff"><rect x="684" y="502" width="2" height="1"/><rect x="684" y="504" width="2" height="7"/><rect x="682" y="503" width="4" height="1"/><rect x="682" y="511" width="6" height="1"/><rect x="692" y="502" width="2" height="1"/><rect x="692" y="504" width="2" height="7"/><rect x="690" y="503" width="4" height="1"/><rect x="690" y="511" width="6" height="1"/><rect x="700" y="510" width="2" height="2"/><rect x="705" y="502" width="7" height="1"/><rect x="705" y="503" width="2" height="1"/><rect x="710" y="503" width="2" height="2"/><rect x="709" y="505" width="2" height="1"/><rect x="708" y="506" width="2" height="1"/><rect x="707" y="507" width="2" height="5"/><rect x="714" y="502" width="5" height="1"/><rect x="714" y="511" width="5" height="1"/><rect x="713" y="503" width="2" height="1"/><rect x="713" y="510" width="2" height="1"/><rect x="718" y="503" width="2" height="3"/><rect x="718" y="507" width="2" height="4"/><rect x="715" y="506" width="4" height="1"/><rect x="722" y="502" width="5" height="1"/><rect x="722" y="506" width="5" height="1"/><rect x="722" y="511" width="5" height="1"/><rect x="721" y="503" width="2" height="3"/><rect x="721" y="507" width="2" height="4"/><rect x="726" y="503" width="2" height="3"/><rect x="726" y="507" width="2" height="4"/><rect x="729" y="502" width="7" height="1"/><rect x="729" y="503" width="2" height="3"/><rect x="729" y="510" width="2" height="1"/><rect x="729" y="506" width="6" height="1"/><rect x="734" y="507" width="2" height="4"/><rect x="730" y="511" width="5" height="1"/><rect x="737" y="502" width="3" height="1"/><rect x="737" y="511" width="3" height="1"/><rect x="738" y="503" width="2" height="4"/><rect x="738" y="508" width="2" height="3"/><rect x="742" y="505" width="2" height="1"/><rect x="742" y="509" width="2" height="3"/><rect x="741" y="506" width="2" height="1"/><rect x="741" y="508" width="2" height="1"/><rect x="738" y="507" width="4" height="1"/><rect x="745" y="502" width="2" height="4"/><rect x="745" y="507" width="2" height="5"/><rect x="750" y="502" width="2" height="4"/><rect x="750" y="507" width="2" height="5"/><rect x="745" y="506" width="7" height="1"/><rect x="753" y="505" width="7" height="1"/><rect x="753" y="511" width="7" height="1"/><rect x="753" y="506" width="2" height="1"/><rect x="758" y="506" width="2" height="1"/><rect x="758" y="510" width="2" height="1"/><rect x="757" y="507" width="2" height="1"/><rect x="756" y="508" width="2" height="1"/><rect x="755" y="509" width="2" height="1"/><rect x="754" y="510" width="2" height="1"/></g>
</svg>
</body></html>
